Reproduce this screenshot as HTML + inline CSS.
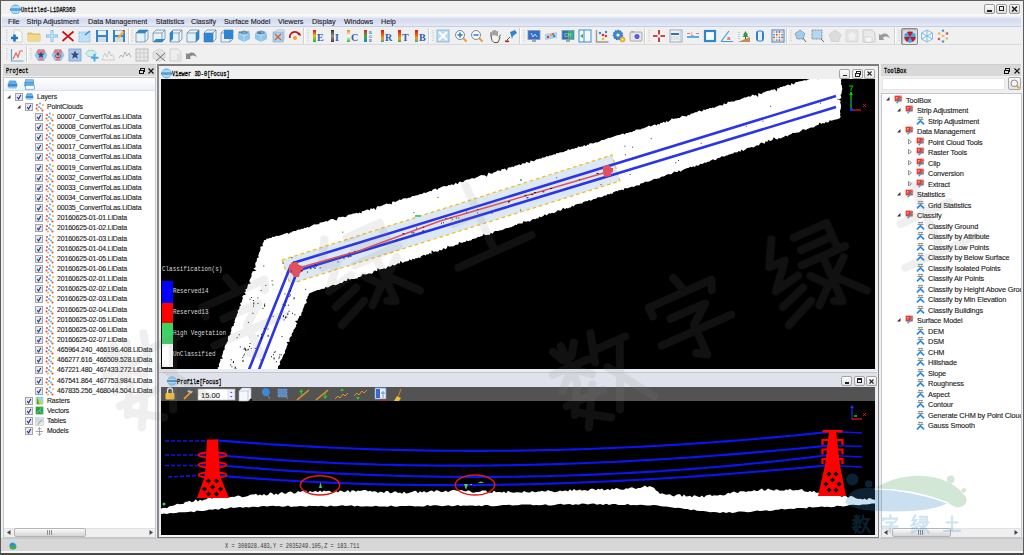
<!DOCTYPE html><html><head><meta charset="utf-8"><style>
html,body{margin:0;padding:0}
body{width:1024px;height:555px;overflow:hidden;background:#f0f0f0;position:relative;font-family:"Liberation Sans",sans-serif}
.a{position:absolute;box-sizing:border-box}
.t{white-space:nowrap;line-height:1;-webkit-text-stroke:0.12px currentColor}
svg{position:absolute;overflow:visible}
</style></head><body>
<div class="a" style="left:0px;top:0px;width:1024px;height:1px;background:#5c5c5c"></div>
<div class="a" style="left:0px;top:0px;width:1px;height:555px;background:#5c5c5c"></div>
<div class="a" style="left:1023px;top:0px;width:1px;height:555px;background:#5c5c5c"></div>
<div class="a" style="left:0px;top:553px;width:1024px;height:2px;background:#4a4a4a"></div>
<svg style="left:10px;top:3.5px" width="11" height="11" viewBox="0 0 22 22"><circle cx="11" cy="11" r="10" fill="#58ace6"/><path d="M5 4.5h12M2.5 7.5h17M2.5 14.5h17M5 17.5h12" stroke="#f0f8fe" stroke-width="1.6"/><rect x="0" y="9.5" width="22" height="3.2" fill="#2a7cc0"/><path d="M2 11.1h18" stroke="#e0f0fb" stroke-width="1" stroke-dasharray="1.6 .8"/></svg>
<div class="a t" style="left:21px;top:6.5px;font-family:'Liberation Mono',monospace;font-size:7.5px;color:#111;letter-spacing:0px;-webkit-text-stroke:0.3px #111;transform:scaleX(0.7111);transform-origin:0 0">Untitled-LiDAR360</div>
<div class="a" style="left:984px;top:4px;width:11px;height:10px;border:1px solid #9a9a9a;border-radius:2px;background:linear-gradient(#fbfbfb,#dcdcdc)"></div>
<div class="a" style="left:996px;top:4px;width:11px;height:10px;border:1px solid #9a9a9a;border-radius:2px;background:linear-gradient(#fbfbfb,#dcdcdc)"></div>
<div class="a" style="left:1009px;top:4px;width:11px;height:10px;border:1px solid #9a9a9a;border-radius:2px;background:linear-gradient(#fbfbfb,#dcdcdc)"></div>
<div class="a" style="left:987px;top:10px;width:5px;height:2px;background:#222"></div>
<div class="a" style="left:999px;top:6px;width:5px;height:5px;border:1.5px solid #222"></div>
<svg style="left:1011px;top:6px" width="7" height="6"><path d="M1 0.5L6 5.5M6 0.5L1 5.5" stroke="#222" stroke-width="1.6"/></svg>
<div class="a" style="left:2px;top:14px;width:1019px;height:13px;background:linear-gradient(#fbfcfe 0%,#f2f4fa 18%,#d5dcef 42%,#d8def0 62%,#e2e8f5 92%);border-bottom:1px solid #c6cee2"></div>
<div class="a t" style="left:8px;top:17.5px;font-family:'Liberation Sans',sans-serif;font-size:7.2px;color:#1a1a2a;letter-spacing:0px;">File</div>
<div class="a t" style="left:26.6px;top:17.5px;font-family:'Liberation Sans',sans-serif;font-size:7.2px;color:#1a1a2a;letter-spacing:0px;">Strip Adjustment</div>
<div class="a t" style="left:88px;top:17.5px;font-family:'Liberation Sans',sans-serif;font-size:7.2px;color:#1a1a2a;letter-spacing:0px;">Data Management</div>
<div class="a t" style="left:155.7px;top:17.5px;font-family:'Liberation Sans',sans-serif;font-size:7.2px;color:#1a1a2a;letter-spacing:0px;">Statistics</div>
<div class="a t" style="left:191px;top:17.5px;font-family:'Liberation Sans',sans-serif;font-size:7.2px;color:#1a1a2a;letter-spacing:0px;">Classify</div>
<div class="a t" style="left:224px;top:17.5px;font-family:'Liberation Sans',sans-serif;font-size:7.2px;color:#1a1a2a;letter-spacing:0px;">Surface Model</div>
<div class="a t" style="left:278px;top:17.5px;font-family:'Liberation Sans',sans-serif;font-size:7.2px;color:#1a1a2a;letter-spacing:0px;">Viewers</div>
<div class="a t" style="left:312px;top:17.5px;font-family:'Liberation Sans',sans-serif;font-size:7.2px;color:#1a1a2a;letter-spacing:0px;">Display</div>
<div class="a t" style="left:344px;top:17.5px;font-family:'Liberation Sans',sans-serif;font-size:7.2px;color:#1a1a2a;letter-spacing:0px;">Windows</div>
<div class="a t" style="left:381px;top:17.5px;font-family:'Liberation Sans',sans-serif;font-size:7.2px;color:#1a1a2a;letter-spacing:0px;">Help</div>
<div class="a" style="left:2px;top:27px;width:1019px;height:18px;background:#f0f0f0;border-bottom:1px solid #dadada"></div>
<div class="a" style="left:2px;top:45px;width:1019px;height:18px;background:#f0f0f0"></div>
<svg style="left:6px;top:29px" width="2" height="14"><path d="M1 1v12" stroke="#b4b4b4" stroke-width=".9" stroke-dasharray=".9 1.6"/></svg>
<svg style="left:131px;top:29px" width="2" height="14"><path d="M1 1v12" stroke="#b4b4b4" stroke-width=".9" stroke-dasharray=".9 1.6"/></svg>
<svg style="left:306.5px;top:29px" width="2" height="14"><path d="M1 1v12" stroke="#b4b4b4" stroke-width=".9" stroke-dasharray=".9 1.6"/></svg>
<svg style="left:431.5px;top:29px" width="2" height="14"><path d="M1 1v12" stroke="#b4b4b4" stroke-width=".9" stroke-dasharray=".9 1.6"/></svg>
<svg style="left:523px;top:29px" width="2" height="14"><path d="M1 1v12" stroke="#b4b4b4" stroke-width=".9" stroke-dasharray=".9 1.6"/></svg>
<svg style="left:648px;top:29px" width="2" height="14"><path d="M1 1v12" stroke="#b4b4b4" stroke-width=".9" stroke-dasharray=".9 1.6"/></svg>
<svg style="left:790px;top:29px" width="2" height="14"><path d="M1 1v12" stroke="#b4b4b4" stroke-width=".9" stroke-dasharray=".9 1.6"/></svg>
<svg style="left:898px;top:29px" width="2" height="14"><path d="M1 1v12" stroke="#b4b4b4" stroke-width=".9" stroke-dasharray=".9 1.6"/></svg>
<div class="a" style="left:127.5px;top:28px;width:1px;height:16px;background:#d0d0d0;border-right:1px solid #fff;width:2px"></div>
<div class="a" style="left:302.5px;top:28px;width:1px;height:16px;background:#d0d0d0;border-right:1px solid #fff;width:2px"></div>
<div class="a" style="left:427.5px;top:28px;width:1px;height:16px;background:#d0d0d0;border-right:1px solid #fff;width:2px"></div>
<div class="a" style="left:518.5px;top:28px;width:1px;height:16px;background:#d0d0d0;border-right:1px solid #fff;width:2px"></div>
<div class="a" style="left:643.5px;top:28px;width:1px;height:16px;background:#d0d0d0;border-right:1px solid #fff;width:2px"></div>
<div class="a" style="left:786px;top:28px;width:1px;height:16px;background:#d0d0d0;border-right:1px solid #fff;width:2px"></div>
<div class="a" style="left:893.5px;top:28px;width:1px;height:16px;background:#d0d0d0;border-right:1px solid #fff;width:2px"></div>
<div class="a" style="left:901px;top:28px;width:17px;height:17px;border:1px solid #8a8a8a;border-radius:2px;background:linear-gradient(#d8d8d8,#e8e8e8);box-shadow:inset 1px 1px 1px #b0b0b0"></div>
<svg style="left:903px;top:30px" width="14" height="14" viewBox="0 0 14 14"><path d="M7 1l5.5 3v6L7 13l-5.5-3V4z" fill="#3aa8e8"/><path d="M7 7L4 1.8h6zM7 7l6 0-3 5.2zM7 7h-6l3 5.2z" fill="#d01020"/></svg>
<svg style="left:10px;top:29px" width="14" height="14" viewBox="0 0 14 14"><path d="M4 1h5l3 3v9H4z" fill="#fafafa" stroke="#c8c8c8" stroke-width=".8"/><path d="M1 9h7M4.5 5.5v7" stroke="#1a7ac4" stroke-width="2.6"/></svg>
<svg style="left:27px;top:29px" width="14" height="14" viewBox="0 0 14 14"><path d="M1 4h4l1 1h7v7H1z" fill="#e8cf74" stroke="#c9ae4e" stroke-width=".7"/><rect x="1" y="6" width="12" height="6" fill="#f0d98a"/></svg>
<svg style="left:45px;top:29px" width="14" height="14" viewBox="0 0 14 14"><path d="M7 1v12M1 7h12" stroke="#7ab8e8" stroke-width="2.8"/><path d="M7 1.8v10.4M1.8 7h10.4" stroke="#dceefb" stroke-width="1.2"/></svg>
<svg style="left:61px;top:29px" width="14" height="14" viewBox="0 0 14 14"><path d="M1.5 2.5L12.5 12M12.5 2.5L1.5 12" stroke="#c8151b" stroke-width="1.7"/></svg>
<svg style="left:78px;top:29px" width="14" height="14" viewBox="0 0 14 14"><rect x="1" y="3" width="11" height="10" fill="#bfe0f7" stroke="#6cb4e6" stroke-width=".8" stroke-dasharray="1 .6"/><path d="M7 6l5-4" stroke="#3b8fd6" stroke-width="1.6"/></svg>
<svg style="left:95px;top:29px" width="14" height="14" viewBox="0 0 14 14"><rect x="1" y="1" width="12" height="12" fill="#2f86d0"/><rect x="3" y="1.5" width="8" height="4.5" fill="#eef2f6"/><rect x="3" y="8" width="8" height="5" fill="#d9dde2"/></svg>
<svg style="left:112px;top:29px" width="14" height="14" viewBox="0 0 14 14"><rect x="1" y="1" width="12" height="12" fill="#2f86d0"/><rect x="3" y="1.5" width="8" height="4.5" fill="#eef2f6"/><rect x="3" y="8" width="8" height="5" fill="#d9dde2"/><path d="M6 9l6-7" stroke="#f2b233" stroke-width="2.2"/><path d="M11.2 2.5l1-1" stroke="#e0453a" stroke-width="2"/></svg>
<svg style="left:135px;top:29px" width="14" height="14" viewBox="0 0 14 14"><path d="M1 4l3-3h9v9l-3 3H1z" fill="#e6f2fb" stroke="#4a6e8c" stroke-width=".6"/><path d="M1 4h9v9M10 4l3-3" fill="none" stroke="#4a6e8c" stroke-width=".6"/><path d="M1 4l3-3h9l-3 3z" fill="#2f86d0"/></svg>
<svg style="left:152px;top:29px" width="14" height="14" viewBox="0 0 14 14"><path d="M1 4l3-3h9v9l-3 3H1z" fill="#e6f2fb" stroke="#4a6e8c" stroke-width=".6"/><path d="M1 4h9v9M10 4l3-3" fill="none" stroke="#4a6e8c" stroke-width=".6"/><path d="M1 13l3-3h9l-3 3z" fill="#2f86d0"/></svg>
<svg style="left:169px;top:29px" width="14" height="14" viewBox="0 0 14 14"><path d="M1 4l3-3h9v9l-3 3H1z" fill="#e6f2fb" stroke="#4a6e8c" stroke-width=".6"/><path d="M1 4h9v9M10 4l3-3" fill="none" stroke="#4a6e8c" stroke-width=".6"/><path d="M1 4l3-3v9l-3 3z" fill="#2f86d0"/></svg>
<svg style="left:186px;top:29px" width="14" height="14" viewBox="0 0 14 14"><path d="M1 4l3-3h9v9l-3 3H1z" fill="#e6f2fb" stroke="#4a6e8c" stroke-width=".6"/><path d="M1 4h9v9M10 4l3-3" fill="none" stroke="#4a6e8c" stroke-width=".6"/><path d="M10 4l3-3v9l-3 3z" fill="#2f86d0"/></svg>
<svg style="left:203px;top:29px" width="14" height="14" viewBox="0 0 14 14"><path d="M1 4l3-3h9v9l-3 3H1z" fill="#e6f2fb" stroke="#4a6e8c" stroke-width=".6"/><path d="M1 4h9v9M10 4l3-3" fill="none" stroke="#4a6e8c" stroke-width=".6"/><rect x="1" y="4" width="9" height="9" fill="#2f86d0"/></svg>
<svg style="left:220px;top:29px" width="14" height="14" viewBox="0 0 14 14"><path d="M1 4l3-3h9v9l-3 3H1z" fill="#e6f2fb" stroke="#4a6e8c" stroke-width=".6"/><path d="M1 4h9v9M10 4l3-3" fill="none" stroke="#4a6e8c" stroke-width=".6"/><rect x="4" y="1" width="9" height="9" fill="#2f86d0"/></svg>
<svg style="left:237px;top:29px" width="14" height="14" viewBox="0 0 14 14"><path d="M1 4l6-3 6 3v6l-6 3-6-3z" fill="#8cc6ef"/><path d="M1 4l6 3 6-3M7 7v6" stroke="#c9e6fa" stroke-width=".7" fill="none"/><text x="7" y="4.5" font-size="3" text-anchor="middle" fill="#333" font-family="Liberation Sans">FRONT</text></svg>
<svg style="left:254px;top:29px" width="14" height="14" viewBox="0 0 14 14"><path d="M1 4l6-3 6 3v6l-6 3-6-3z" fill="#8cc6ef"/><path d="M1 4l6 3 6-3M7 7v6" stroke="#c9e6fa" stroke-width=".7" fill="none"/><text x="7" y="4.5" font-size="3" text-anchor="middle" fill="#333" font-family="Liberation Sans">BACK</text></svg>
<svg style="left:271px;top:29px" width="14" height="14" viewBox="0 0 14 14"><rect x="2" y="3" width="10" height="10" fill="#a9d3f2" stroke="#7aa6c8" stroke-width=".6"/><path d="M4 5l6 6M10 5l-6 6" stroke="#e05a2a" stroke-width="1.2"/><path d="M4 3l2-2h7v9l-1 2" fill="none" stroke="#7aa6c8" stroke-width=".6"/></svg>
<svg style="left:288px;top:29px" width="14" height="14" viewBox="0 0 14 14"><path d="M2 9A5 5 0 0 1 11.5 6" stroke="#b9161a" stroke-width="1.8" fill="none"/><path d="M9.5 5.5l3.5 1.5-1 -3.5z" fill="#b9161a"/><circle cx="7" cy="9" r="2" fill="#f0a020"/></svg>
<svg style="left:312px;top:29px" width="14" height="14" viewBox="0 0 14 14"><defs><linearGradient id="gE" x1="0" y1="0" x2="0" y2="1"><stop offset="0" stop-color="#e01010"/><stop offset=".5" stop-color="#e8c020"/><stop offset="1" stop-color="#20b040"/></linearGradient></defs><rect x="1" y="1" width="3" height="12" fill="url(#gE)"/><text x="5" y="11.5" font-family="Liberation Serif" font-weight="bold" font-size="10" fill="#2a5fb8">E</text></svg>
<svg style="left:330px;top:29px" width="14" height="14" viewBox="0 0 14 14"><defs><linearGradient id="gI" x1="0" y1="0" x2="0" y2="1"><stop offset="0" stop-color="#303030"/><stop offset=".5" stop-color="#909090"/><stop offset="1" stop-color="#404040"/></linearGradient></defs><rect x="1" y="1" width="3" height="12" fill="url(#gI)"/><text x="5" y="11.5" font-family="Liberation Serif" font-weight="bold" font-size="10" fill="#2a5fb8">I</text></svg>
<svg style="left:346px;top:29px" width="14" height="14" viewBox="0 0 14 14"><defs><linearGradient id="gC" x1="0" y1="0" x2="0" y2="1"><stop offset="0" stop-color="#f08020"/><stop offset=".5" stop-color="#ffffff"/><stop offset="1" stop-color="#40b040"/></linearGradient></defs><rect x="1" y="1" width="3" height="12" fill="url(#gC)"/><text x="5" y="11.5" font-family="Liberation Serif" font-weight="bold" font-size="10" fill="#2a5fb8">C</text></svg>
<svg style="left:363px;top:29px" width="14" height="14" viewBox="0 0 14 14"><defs><linearGradient id="gRGB" x1="0" y1="0" x2="0" y2="1"><stop offset="0" stop-color="#e02020"/><stop offset=".5" stop-color="#40b040"/><stop offset="1" stop-color="#2080e0"/></linearGradient></defs><rect x="1" y="1" width="3" height="12" fill="url(#gRGB)"/><text x="6" y="5" font-family="Liberation Serif" font-size="4" font-weight="bold" fill="#2a5fb8">R</text><text x="6" y="9" font-family="Liberation Serif" font-size="4" font-weight="bold" fill="#2a5fb8">G</text><text x="6" y="13" font-family="Liberation Serif" font-size="4" font-weight="bold" fill="#2a5fb8">B</text></svg>
<svg style="left:380px;top:29px" width="14" height="14" viewBox="0 0 14 14"><defs><linearGradient id="gR" x1="0" y1="0" x2="0" y2="1"><stop offset="0" stop-color="#e01010"/><stop offset=".7" stop-color="#e8a020"/><stop offset="1" stop-color="#20b0a0"/></linearGradient></defs><rect x="1" y="1" width="3" height="12" fill="url(#gR)"/><text x="5" y="11.5" font-family="Liberation Serif" font-weight="bold" font-size="10" fill="#2a5fb8">R</text></svg>
<svg style="left:397px;top:29px" width="14" height="14" viewBox="0 0 14 14"><defs><linearGradient id="gT" x1="0" y1="0" x2="0" y2="1"><stop offset="0" stop-color="#e01010"/><stop offset=".7" stop-color="#e8a020"/><stop offset="1" stop-color="#20b060"/></linearGradient></defs><rect x="1" y="1" width="3" height="12" fill="url(#gT)"/><text x="5" y="11.5" font-family="Liberation Serif" font-weight="bold" font-size="10" fill="#2a5fb8">T</text></svg>
<svg style="left:414px;top:29px" width="14" height="14" viewBox="0 0 14 14"><defs><linearGradient id="gB" x1="0" y1="0" x2="0" y2="1"><stop offset="0" stop-color="#e01010"/><stop offset=".7" stop-color="#e8a020"/><stop offset="1" stop-color="#20b0c0"/></linearGradient></defs><rect x="1" y="1" width="3" height="12" fill="url(#gB)"/><text x="5" y="11.5" font-family="Liberation Serif" font-weight="bold" font-size="10" fill="#2a5fb8">B</text></svg>
<svg style="left:436px;top:29px" width="14" height="14" viewBox="0 0 14 14"><rect x="1" y="1" width="12" height="12" fill="#bcdcf4" stroke="#7cb2dc" stroke-width=".8"/><path d="M3 3l3 3M11 3l-3 3M3 11l3-3M11 11l-3-3" stroke="#fff" stroke-width="1.8"/><circle cx="7" cy="7" r="2" fill="#fff"/></svg>
<svg style="left:454px;top:29px" width="14" height="14" viewBox="0 0 14 14"><circle cx="6" cy="6" r="4.5" fill="#f4f8fb" stroke="#7a8a98" stroke-width="1"/><path d="M3.5 6h5M6 3.5v5" stroke="#2f7ed0" stroke-width="1.5"/><path d="M9 9l3.5 3.5" stroke="#e8a040" stroke-width="2.2"/></svg>
<svg style="left:470px;top:29px" width="14" height="14" viewBox="0 0 14 14"><circle cx="6" cy="6" r="4.5" fill="#f4f8fb" stroke="#7a8a98" stroke-width="1"/><path d="M3.5 6h5" stroke="#2f7ed0" stroke-width="1.5"/><path d="M9 9l3.5 3.5" stroke="#e8a040" stroke-width="2.2"/></svg>
<svg style="left:488px;top:29px" width="14" height="14" viewBox="0 0 14 14"><path d="M3 7V3.5M5 6V2M7 6V1.5M9 6.5V2.5M11 8l1.5-2M3 7l1 4.5 2 2h4l2-5" stroke="#555" stroke-width="1" fill="#f4f4ea" stroke-linecap="round"/></svg>
<svg style="left:504px;top:29px" width="14" height="14" viewBox="0 0 14 14"><path d="M6 3l5-2 2 3-4 3-1 3z" fill="#2f86d0"/><path d="M6 8L3 11" stroke="#555" stroke-width="1"/><ellipse cx="3" cy="12.3" rx="2.2" ry="1" fill="#c81a1a"/></svg>
<svg style="left:527px;top:29px" width="14" height="14" viewBox="0 0 14 14"><rect x="1" y="1.5" width="12" height="9" fill="#2f6fcc" stroke="#8a9aaa" stroke-width=".8"/><path d="M4 4l2 4 2-3 2 3" stroke="#fff" stroke-width=".7" fill="none"/><rect x="5" y="11" width="4" height="2" fill="#9aa8b4"/></svg>
<svg style="left:544px;top:29px" width="14" height="14" viewBox="0 0 14 14"><path d="M1 5l12-2v6L1 11z" fill="#a8d4f0"/><circle cx="4" cy="8" r="1.2" fill="#e04040"/><circle cx="7" cy="6" r="1.2" fill="#f0b020"/><circle cx="10" cy="7" r="1.2" fill="#2f86d0"/><circle cx="9" cy="5" r="1" fill="#e04040"/></svg>
<svg style="left:561px;top:29px" width="14" height="14" viewBox="0 0 14 14"><rect x="1" y="1.5" width="12" height="9" fill="#2f6fcc" stroke="#8a9aaa" stroke-width=".8"/><rect x="7" y="2" width="5.5" height="8" fill="#2ab08a"/><text x="3" y="8" font-size="5" fill="#e0e040" font-family="Liberation Sans">CH</text><rect x="5" y="11" width="4" height="2" fill="#9aa8b4"/></svg>
<svg style="left:578px;top:29px" width="14" height="14" viewBox="0 0 14 14"><rect x="1" y="1" width="12" height="12" fill="#f4f6f8" stroke="#3b8fd6" stroke-width="1"/><path d="M6 1v12" stroke="#3b8fd6" stroke-width="1"/><path d="M5 5l-3 2 3 2z" fill="#40b040"/></svg>
<svg style="left:595px;top:29px" width="14" height="14" viewBox="0 0 14 14"><path d="M1.5 1v12h12" stroke="#999" stroke-width="1.4" fill="none"/><circle cx="5" cy="4" r="1.2" fill="#2f86d0"/><circle cx="8" cy="6" r="1.3" fill="#e03030"/><circle cx="11" cy="3" r="1.2" fill="#2f86d0"/><circle cx="8" cy="10" r="1.3" fill="#f0c020"/><circle cx="11" cy="7" r="1.2" fill="#e03030"/></svg>
<svg style="left:612px;top:29px" width="14" height="14" viewBox="0 0 14 14"><circle cx="6" cy="6" r="4.5" fill="#3d8ad4" stroke="#2f70b8" stroke-width="1.5" stroke-dasharray="1.5 1"/><circle cx="6" cy="6" r="1.6" fill="#fff"/><circle cx="10.5" cy="10.5" r="2.8" fill="#f0a818"/><circle cx="10.5" cy="10.5" r="1" fill="#fff"/></svg>
<svg style="left:629px;top:29px" width="14" height="14" viewBox="0 0 14 14"><rect x="1" y="3" width="12" height="9" rx="1" fill="#e6e6e6" stroke="#999" stroke-width=".8"/><circle cx="8" cy="7.5" r="2.5" fill="#5a5ae0"/><rect x="2" y="2" width="3" height="1.5" fill="#aaa"/></svg>
<svg style="left:652px;top:29px" width="14" height="14" viewBox="0 0 14 14"><path d="M7 1v4.5M7 8.5V13M1 7h4.5M8.5 7H13" stroke="#b01818" stroke-width="1.6"/></svg>
<svg style="left:669px;top:29px" width="14" height="14" viewBox="0 0 14 14"><rect x="1" y="1" width="12" height="12" fill="#f0f2f4" stroke="#8a9aaa" stroke-width=".8"/><rect x="2" y="4" width="8" height="2" fill="#3a6fb0"/><path d="M2 8h8M2 10h8" stroke="#9aa" stroke-width=".6" stroke-dasharray="1 .6"/><rect x="10.5" y="2" width="2" height="10" fill="#c8d8e8"/></svg>
<svg style="left:686px;top:29px" width="14" height="14" viewBox="0 0 14 14"><rect x="1" y="7" width="12" height="2" fill="#5aaae8"/><path d="M1 4.5h3M10 4.5h3" stroke="#e05050" stroke-width=".8"/><text x="5" y="6.5" font-size="5" fill="#e05050" font-family="Liberation Sans">L</text></svg>
<svg style="left:703px;top:29px" width="14" height="14" viewBox="0 0 14 14"><rect x="2" y="2" width="10" height="10" fill="#fff" stroke="#2f86d0" stroke-width="2.2"/></svg>
<svg style="left:720px;top:29px" width="14" height="14" viewBox="0 0 14 14"><path d="M1 12.5h12M1 12.5L9 2" stroke="#3b9be0" stroke-width="1.2" fill="none"/><text x="7" y="11" font-size="6" fill="#e02020" font-family="Liberation Sans">a</text></svg>
<svg style="left:737px;top:29px" width="14" height="14" viewBox="0 0 14 14"><path d="M1 13l12-5v5z" fill="#c98a5a"/><path d="M8.5 2l-2.5 4h5z M8.5 4l-3 4h6z" fill="#2a9a4a"/><rect x="8" y="8" width="1" height="2" fill="#6a4a2a"/><path d="M2 3v8" stroke="#9ab" stroke-width="1" stroke-dasharray="1 1"/></svg>
<svg style="left:753px;top:29px" width="14" height="14" viewBox="0 0 14 14"><rect x="3" y="1.5" width="8" height="11" rx="3" fill="#2f7ed0"/><rect x="5" y="2.5" width="4" height="9" fill="#e6f0fa"/></svg>
<svg style="left:771px;top:29px" width="14" height="14" viewBox="0 0 14 14"><rect x="1" y="1" width="12" height="12" fill="#eef4fb" stroke="#3b7fd0" stroke-width="1"/><circle cx="3.0" cy="3.0" r=".9" fill="#f0c020"/><circle cx="3.0" cy="5.7" r=".9" fill="#3a9ae0"/><circle cx="3.0" cy="8.4" r=".9" fill="#e03030"/><circle cx="3.0" cy="11.100000000000001" r=".9" fill="#f0c020"/><circle cx="5.7" cy="3.0" r=".9" fill="#3a9ae0"/><circle cx="5.7" cy="5.7" r=".9" fill="#e03030"/><circle cx="5.7" cy="8.4" r=".9" fill="#f0c020"/><circle cx="5.7" cy="11.100000000000001" r=".9" fill="#3a9ae0"/><circle cx="8.4" cy="3.0" r=".9" fill="#e03030"/><circle cx="8.4" cy="5.7" r=".9" fill="#f0c020"/><circle cx="8.4" cy="8.4" r=".9" fill="#3a9ae0"/><circle cx="8.4" cy="11.100000000000001" r=".9" fill="#e03030"/><circle cx="11.100000000000001" cy="3.0" r=".9" fill="#f0c020"/><circle cx="11.100000000000001" cy="5.7" r=".9" fill="#3a9ae0"/><circle cx="11.100000000000001" cy="8.4" r=".9" fill="#e03030"/><circle cx="11.100000000000001" cy="11.100000000000001" r=".9" fill="#f0c020"/></svg>
<svg style="left:794px;top:29px" width="14" height="14" viewBox="0 0 14 14"><path d="M6 1l5 3.5-2 5.5H3L1 4.5z" fill="#9ccef0" stroke="#555" stroke-width=".6" stroke-dasharray="1 .5"/><path d="M9 9l3 4" stroke="#666" stroke-width="1"/></svg>
<svg style="left:811px;top:29px" width="14" height="14" viewBox="0 0 14 14"><rect x="1" y="1" width="10" height="9" fill="#b4d8f4" stroke="#555" stroke-width=".6" stroke-dasharray="1 .5"/><path d="M10 10l3 3" stroke="#666" stroke-width="1"/></svg>
<svg style="left:828px;top:29px" width="14" height="14" viewBox="0 0 14 14"><path d="M7 1l6 4.5-2.3 7H3.3L1 5.5z" fill="#dcdcdc" stroke="#c8c8c8" stroke-width=".6"/></svg>
<svg style="left:845px;top:29px" width="14" height="14" viewBox="0 0 14 14"><rect x="1" y="1" width="12" height="12" fill="#e4e4e4" stroke="#d0d0d0" stroke-width=".6"/><path d="M7 3l4 3-1.5 5h-5L3 6z" fill="#f0f0f0"/></svg>
<svg style="left:862px;top:29px" width="14" height="14" viewBox="0 0 14 14"><path d="M1 1h9l3 3v9H1z" fill="#eaeaea" stroke="#c0c0c0" stroke-width=".8"/><rect x="3" y="8" width="7" height="5" fill="#f6f6f6" stroke="#c0c0c0" stroke-width=".5"/></svg>
<svg style="left:878px;top:29px" width="14" height="14" viewBox="0 0 14 14"><path d="M3 6c4-3 8-1 9 4-2-3-5-3-7-1l1 2H1V5z" fill="#9a9a9a"/></svg>
<svg style="left:920px;top:29px" width="14" height="14" viewBox="0 0 14 14"><path d="M7 1l5.5 3v6L7 13l-5.5-3V4z M7 1v12M1.5 4l11 6M12.5 4l-11 6" fill="none" stroke="#6ab4e6" stroke-width=".8"/></svg>
<svg style="left:936px;top:29px" width="14" height="14" viewBox="0 0 14 14"><circle cx="7" cy="1.8" r="1.2" fill="#3a8ad0"/><circle cx="3" cy="4.5" r="1.2" fill="#f0c020"/><circle cx="11" cy="4.5" r="1.2" fill="#e03030"/><circle cx="7" cy="7" r="1.3" fill="#f0c020"/><circle cx="3" cy="10" r="1.2" fill="#e03030"/><circle cx="11" cy="9.5" r="1.2" fill="#f0c020"/><circle cx="7" cy="12.5" r="1.2" fill="#3a8ad0"/><path d="M7 2L3 4.5 7 7 11 4.5z M7 7L3 10 7 12.5 11 9.5z" fill="none" stroke="#b8d0e8" stroke-width=".4"/></svg>
<svg style="left:6px;top:47px" width="2" height="14"><path d="M1 1v12" stroke="#b4b4b4" stroke-width=".9" stroke-dasharray=".9 1.6"/></svg>
<svg style="left:29.5px;top:47px" width="2" height="14"><path d="M1 1v12" stroke="#b4b4b4" stroke-width=".9" stroke-dasharray=".9 1.6"/></svg>
<div class="a" style="left:25.5px;top:46px;width:1px;height:16px;background:#d0d0d0;border-right:1px solid #fff;width:2px"></div>
<svg style="left:10px;top:48px" width="14" height="14" viewBox="0 0 14 14"><path d="M1.5 1v12h12" stroke="#5aa6e0" stroke-width="1.2" fill="none"/><path d="M3 11l3-6 2 4 2-6h3" stroke="#e86050" stroke-width="1.2" fill="none"/></svg>
<svg style="left:34px;top:48px" width="14" height="14" viewBox="0 0 14 14"><path d="M1 7l3-5.5h6L13 7l-3 5.5H4z" fill="#8ccdf2" stroke="#6ab0e0" stroke-width=".5"/><path d="M7 7L2.5 4.5 4 1.5h2.5zM7 7l4.5-2.5L10 1.5H7.5zM7 7l-2.5 5.5h5z" fill="#f07878"/><path d="M7 3.2l1 2.6h2.6l-2.1 1.6.9 2.7L7 8.5 4.6 10.1l.9-2.7L3.4 5.8H6z" fill="#2a4a80"/></svg>
<svg style="left:51px;top:48px" width="14" height="14" viewBox="0 0 14 14"><path d="M1 7l3-5.5h6L13 7l-3 5.5H4z" fill="#8ccdf2" stroke="#6ab0e0" stroke-width=".5"/><path d="M7 7L2.5 4.5 4 1.5h2.5zM7 7l4.5-2.5L10 1.5H7.5zM7 7l-2.5 5.5h5z" fill="#f07878"/><ellipse cx="7" cy="8" rx="3" ry="1.6" fill="none" stroke="#c02020" stroke-width=".8"/><rect x="6" y="4.5" width="2" height="3" fill="#2a5a9a"/></svg>
<svg style="left:68px;top:48px" width="14" height="14" viewBox="0 0 14 14"><rect x="1" y="1" width="12" height="12" fill="#a8c8ee" stroke="#7a9ec8" stroke-width=".8"/><path d="M7 2.5l1.3 3h3l-2.4 2 1 3.2L7 8.9 4.1 10.7l1-3.2-2.4-2h3z" fill="#3a4a80"/></svg>
<svg style="left:85px;top:48px" width="14" height="14" viewBox="0 0 14 14"><ellipse cx="6" cy="5.5" rx="5" ry="3.2" fill="#d4ecf4" stroke="#7ad0a8" stroke-width=".8"/><path d="M9.5 6v7.5M6 9.8h7.5" stroke="#4aaae8" stroke-width="2"/></svg>
<svg style="left:101px;top:48px" width="14" height="14" viewBox="0 0 14 14"><path d="M1 12l3-7 2 4 2-6 2 5 1.5-2 2 6z" fill="none" stroke="#b0b0b0" stroke-width=".8" stroke-dasharray="1 .5"/></svg>
<svg style="left:118px;top:48px" width="14" height="14" viewBox="0 0 14 14"><path d="M1 10l2-3 2 2 2-5 2 4 2-3 2 4" fill="none" stroke="#a0a0a0" stroke-width=".8"/></svg>
<svg style="left:135px;top:48px" width="14" height="14" viewBox="0 0 14 14"><rect x="1" y="1" width="12" height="12" fill="#e8e8e8" stroke="#b0b0b0" stroke-width=".8"/><path d="M1 5h12M1 9h12M5 1v12M9 1v12" stroke="#c0c0c0" stroke-width=".6"/></svg>
<svg style="left:152px;top:48px" width="14" height="14" viewBox="0 0 14 14"><path d="M7 .8l6 3.2v6L7 13.2 1 10V4z" fill="#e2e2e2" stroke="#c8c8c8" stroke-width=".6"/><path d="M4 5l9 8M13 5l-9 8" stroke="#707070" stroke-width="1"/></svg>
<svg style="left:169px;top:48px" width="14" height="14" viewBox="0 0 14 14"><path d="M1 1h8l3 3v9H1z" fill="#ededed" stroke="#c8c8c8" stroke-width=".8"/><path d="M8 5l5 3v5l-5 1z" fill="#dedede"/></svg>
<svg style="left:185px;top:48px" width="14" height="14" viewBox="0 0 14 14"><path d="M3 6c4-3 8-1 9 4-2-3-5-3-7-1l1 2H1V5z" fill="#8a8a8a"/></svg>
<div class="a" style="left:3px;top:64px;width:153px;height:12px;background:#d8d8d8;border-top:1px solid #cfcfcf"></div>
<div class="a t" style="left:6px;top:68px;font-family:'Liberation Mono',monospace;font-size:7.5px;color:#000;letter-spacing:0px;-webkit-text-stroke:0.3px #000;transform:scaleX(0.7111);transform-origin:0 0">Project</div>
<svg style="left:139px;top:68px" width="6" height="6"><rect x="1.5" y=".5" width="4" height="3" fill="none" stroke="#111" stroke-width="1"/><rect x=".5" y="2.5" width="4" height="3" fill="#d8d8d8" stroke="#111" stroke-width="1"/></svg>
<svg style="left:148px;top:68px" width="6" height="6"><path d="M.5 .5l5 5M5.5 .5l-5 5" stroke="#111" stroke-width="1.2"/></svg>
<div class="a" style="left:3px;top:77px;width:153px;height:461px;background:#fff;border:1px solid #c2c8d2"></div>
<div class="a" style="left:4px;top:78px;width:151px;height:13px;background:linear-gradient(#ffffff,#eef1f6);border-bottom:1px solid #dde2ea"></div>
<svg style="left:7px;top:79px" width="11" height="11" viewBox="0 0 14 14"><path d="M3 2h8l2 4H1z" fill="#5aaae8"/><rect x="1" y="6" width="12" height="4" fill="#3d8ad4"/><path d="M1 10h12l-1.5 2h-9z" fill="#8cc6ef"/></svg>
<svg style="left:24px;top:79px" width="11" height="11" viewBox="0 0 14 14"><rect x="2" y="1" width="10" height="5" fill="#8cc6ef" stroke="#3d8ad4" stroke-width=".8"/><rect x="1" y="4" width="11" height="5" fill="#5aaae8" stroke="#3d8ad4" stroke-width=".8"/><rect x="2" y="8" width="11" height="5" fill="#fff" stroke="#3d8ad4" stroke-width=".8"/></svg>
<svg style="left:7px;top:94.6px" width="4" height="4"><path d="M3.5 0V3.5H0z" fill="#333"/></svg>
<svg style="left:15px;top:93px" width="8" height="8"><rect x=".5" y=".5" width="7" height="7" fill="#e6e8ee" stroke="#a4a4a4" stroke-width="1"/><path d="M2.2 4.2l1.4 1.8L5.8 2" stroke="#2a3a8a" stroke-width="1.2" fill="none"/></svg>
<svg style="left:25px;top:92.1px" width="9" height="9" viewBox="0 0 14 14"><path d="M3 2h8l2 4H1z" fill="#5aaae8"/><rect x="1" y="6" width="12" height="4" fill="#3d8ad4"/><path d="M1 10h12l-1.5 2h-9z" fill="#8cc6ef"/></svg>
<div class="a t" style="left:37px;top:93.6px;font-family:'Liberation Sans',sans-serif;font-size:6.9px;color:#1a1a1a;letter-spacing:-0.12px;">Layers</div>
<svg style="left:17px;top:104.74px" width="4" height="4"><path d="M3.5 0V3.5H0z" fill="#333"/></svg>
<svg style="left:25px;top:103px" width="8" height="8"><rect x=".5" y=".5" width="7" height="7" fill="#e6e8ee" stroke="#a4a4a4" stroke-width="1"/><path d="M2.2 4.2l1.4 1.8L5.8 2" stroke="#2a3a8a" stroke-width="1.2" fill="none"/></svg>
<svg style="left:35px;top:101.74px" width="10" height="10"><circle cx="2" cy="3" r="1" fill="#e84040"/><circle cx="5" cy="1.5" r="1" fill="#5aaae8"/><circle cx="8" cy="3" r="1" fill="#f0b030"/><circle cx="4" cy="5" r="1" fill="#5aaae8"/><circle cx="1.5" cy="6.5" r="1" fill="#e84040"/><circle cx="6" cy="6.5" r="1" fill="#5aaae8"/><circle cx="3" cy="8.5" r="1" fill="#f0b030"/><circle cx="7.5" cy="8.5" r="1" fill="#e84040"/></svg>
<div class="a t" style="left:47px;top:103.74px;font-family:'Liberation Sans',sans-serif;font-size:6.9px;color:#1a1a1a;letter-spacing:-0.12px;">PointClouds</div>
<svg style="left:35px;top:113px" width="8" height="8"><rect x=".5" y=".5" width="7" height="7" fill="#e6e8ee" stroke="#a4a4a4" stroke-width="1"/><path d="M2.2 4.2l1.4 1.8L5.8 2" stroke="#2a3a8a" stroke-width="1.2" fill="none"/></svg>
<svg style="left:45px;top:111.88px" width="10" height="10"><circle cx="2" cy="3" r="1" fill="#e84040"/><circle cx="5" cy="1.5" r="1" fill="#5aaae8"/><circle cx="8" cy="3" r="1" fill="#f0b030"/><circle cx="4" cy="5" r="1" fill="#5aaae8"/><circle cx="1.5" cy="6.5" r="1" fill="#e84040"/><circle cx="6" cy="6.5" r="1" fill="#5aaae8"/><circle cx="3" cy="8.5" r="1" fill="#f0b030"/><circle cx="7.5" cy="8.5" r="1" fill="#e84040"/></svg>
<div class="a t" style="left:57px;top:113.88px;font-family:'Liberation Sans',sans-serif;font-size:6.9px;color:#1a1a1a;letter-spacing:-0.12px;">00007_ConvertToLas.LiData</div>
<svg style="left:35px;top:123px" width="8" height="8"><rect x=".5" y=".5" width="7" height="7" fill="#e6e8ee" stroke="#a4a4a4" stroke-width="1"/><path d="M2.2 4.2l1.4 1.8L5.8 2" stroke="#2a3a8a" stroke-width="1.2" fill="none"/></svg>
<svg style="left:45px;top:122.02px" width="10" height="10"><circle cx="2" cy="3" r="1" fill="#e84040"/><circle cx="5" cy="1.5" r="1" fill="#5aaae8"/><circle cx="8" cy="3" r="1" fill="#f0b030"/><circle cx="4" cy="5" r="1" fill="#5aaae8"/><circle cx="1.5" cy="6.5" r="1" fill="#e84040"/><circle cx="6" cy="6.5" r="1" fill="#5aaae8"/><circle cx="3" cy="8.5" r="1" fill="#f0b030"/><circle cx="7.5" cy="8.5" r="1" fill="#e84040"/></svg>
<div class="a t" style="left:57px;top:124.02px;font-family:'Liberation Sans',sans-serif;font-size:6.9px;color:#1a1a1a;letter-spacing:-0.12px;">00008_ConvertToLas.LiData</div>
<svg style="left:35px;top:133px" width="8" height="8"><rect x=".5" y=".5" width="7" height="7" fill="#e6e8ee" stroke="#a4a4a4" stroke-width="1"/><path d="M2.2 4.2l1.4 1.8L5.8 2" stroke="#2a3a8a" stroke-width="1.2" fill="none"/></svg>
<svg style="left:45px;top:132.16px" width="10" height="10"><circle cx="2" cy="3" r="1" fill="#e84040"/><circle cx="5" cy="1.5" r="1" fill="#5aaae8"/><circle cx="8" cy="3" r="1" fill="#f0b030"/><circle cx="4" cy="5" r="1" fill="#5aaae8"/><circle cx="1.5" cy="6.5" r="1" fill="#e84040"/><circle cx="6" cy="6.5" r="1" fill="#5aaae8"/><circle cx="3" cy="8.5" r="1" fill="#f0b030"/><circle cx="7.5" cy="8.5" r="1" fill="#e84040"/></svg>
<div class="a t" style="left:57px;top:134.16px;font-family:'Liberation Sans',sans-serif;font-size:6.9px;color:#1a1a1a;letter-spacing:-0.12px;">00009_ConvertToLas.LiData</div>
<svg style="left:35px;top:143px" width="8" height="8"><rect x=".5" y=".5" width="7" height="7" fill="#e6e8ee" stroke="#a4a4a4" stroke-width="1"/><path d="M2.2 4.2l1.4 1.8L5.8 2" stroke="#2a3a8a" stroke-width="1.2" fill="none"/></svg>
<svg style="left:45px;top:142.3px" width="10" height="10"><circle cx="2" cy="3" r="1" fill="#e84040"/><circle cx="5" cy="1.5" r="1" fill="#5aaae8"/><circle cx="8" cy="3" r="1" fill="#f0b030"/><circle cx="4" cy="5" r="1" fill="#5aaae8"/><circle cx="1.5" cy="6.5" r="1" fill="#e84040"/><circle cx="6" cy="6.5" r="1" fill="#5aaae8"/><circle cx="3" cy="8.5" r="1" fill="#f0b030"/><circle cx="7.5" cy="8.5" r="1" fill="#e84040"/></svg>
<div class="a t" style="left:57px;top:144.3px;font-family:'Liberation Sans',sans-serif;font-size:6.9px;color:#1a1a1a;letter-spacing:-0.12px;">00017_ConvertToLas.LiData</div>
<svg style="left:35px;top:153px" width="8" height="8"><rect x=".5" y=".5" width="7" height="7" fill="#e6e8ee" stroke="#a4a4a4" stroke-width="1"/><path d="M2.2 4.2l1.4 1.8L5.8 2" stroke="#2a3a8a" stroke-width="1.2" fill="none"/></svg>
<svg style="left:45px;top:152.44px" width="10" height="10"><circle cx="2" cy="3" r="1" fill="#e84040"/><circle cx="5" cy="1.5" r="1" fill="#5aaae8"/><circle cx="8" cy="3" r="1" fill="#f0b030"/><circle cx="4" cy="5" r="1" fill="#5aaae8"/><circle cx="1.5" cy="6.5" r="1" fill="#e84040"/><circle cx="6" cy="6.5" r="1" fill="#5aaae8"/><circle cx="3" cy="8.5" r="1" fill="#f0b030"/><circle cx="7.5" cy="8.5" r="1" fill="#e84040"/></svg>
<div class="a t" style="left:57px;top:154.44px;font-family:'Liberation Sans',sans-serif;font-size:6.9px;color:#1a1a1a;letter-spacing:-0.12px;">00018_ConvertToLas.LiData</div>
<svg style="left:35px;top:164px" width="8" height="8"><rect x=".5" y=".5" width="7" height="7" fill="#e6e8ee" stroke="#a4a4a4" stroke-width="1"/><path d="M2.2 4.2l1.4 1.8L5.8 2" stroke="#2a3a8a" stroke-width="1.2" fill="none"/></svg>
<svg style="left:45px;top:162.57999999999998px" width="10" height="10"><circle cx="2" cy="3" r="1" fill="#e84040"/><circle cx="5" cy="1.5" r="1" fill="#5aaae8"/><circle cx="8" cy="3" r="1" fill="#f0b030"/><circle cx="4" cy="5" r="1" fill="#5aaae8"/><circle cx="1.5" cy="6.5" r="1" fill="#e84040"/><circle cx="6" cy="6.5" r="1" fill="#5aaae8"/><circle cx="3" cy="8.5" r="1" fill="#f0b030"/><circle cx="7.5" cy="8.5" r="1" fill="#e84040"/></svg>
<div class="a t" style="left:57px;top:164.57999999999998px;font-family:'Liberation Sans',sans-serif;font-size:6.9px;color:#1a1a1a;letter-spacing:-0.12px;">00019_ConvertToLas.LiData</div>
<svg style="left:35px;top:174px" width="8" height="8"><rect x=".5" y=".5" width="7" height="7" fill="#e6e8ee" stroke="#a4a4a4" stroke-width="1"/><path d="M2.2 4.2l1.4 1.8L5.8 2" stroke="#2a3a8a" stroke-width="1.2" fill="none"/></svg>
<svg style="left:45px;top:172.72px" width="10" height="10"><circle cx="2" cy="3" r="1" fill="#e84040"/><circle cx="5" cy="1.5" r="1" fill="#5aaae8"/><circle cx="8" cy="3" r="1" fill="#f0b030"/><circle cx="4" cy="5" r="1" fill="#5aaae8"/><circle cx="1.5" cy="6.5" r="1" fill="#e84040"/><circle cx="6" cy="6.5" r="1" fill="#5aaae8"/><circle cx="3" cy="8.5" r="1" fill="#f0b030"/><circle cx="7.5" cy="8.5" r="1" fill="#e84040"/></svg>
<div class="a t" style="left:57px;top:174.72px;font-family:'Liberation Sans',sans-serif;font-size:6.9px;color:#1a1a1a;letter-spacing:-0.12px;">00032_ConvertToLas.LiData</div>
<svg style="left:35px;top:184px" width="8" height="8"><rect x=".5" y=".5" width="7" height="7" fill="#e6e8ee" stroke="#a4a4a4" stroke-width="1"/><path d="M2.2 4.2l1.4 1.8L5.8 2" stroke="#2a3a8a" stroke-width="1.2" fill="none"/></svg>
<svg style="left:45px;top:182.86px" width="10" height="10"><circle cx="2" cy="3" r="1" fill="#e84040"/><circle cx="5" cy="1.5" r="1" fill="#5aaae8"/><circle cx="8" cy="3" r="1" fill="#f0b030"/><circle cx="4" cy="5" r="1" fill="#5aaae8"/><circle cx="1.5" cy="6.5" r="1" fill="#e84040"/><circle cx="6" cy="6.5" r="1" fill="#5aaae8"/><circle cx="3" cy="8.5" r="1" fill="#f0b030"/><circle cx="7.5" cy="8.5" r="1" fill="#e84040"/></svg>
<div class="a t" style="left:57px;top:184.86px;font-family:'Liberation Sans',sans-serif;font-size:6.9px;color:#1a1a1a;letter-spacing:-0.12px;">00033_ConvertToLas.LiData</div>
<svg style="left:35px;top:194px" width="8" height="8"><rect x=".5" y=".5" width="7" height="7" fill="#e6e8ee" stroke="#a4a4a4" stroke-width="1"/><path d="M2.2 4.2l1.4 1.8L5.8 2" stroke="#2a3a8a" stroke-width="1.2" fill="none"/></svg>
<svg style="left:45px;top:193.0px" width="10" height="10"><circle cx="2" cy="3" r="1" fill="#e84040"/><circle cx="5" cy="1.5" r="1" fill="#5aaae8"/><circle cx="8" cy="3" r="1" fill="#f0b030"/><circle cx="4" cy="5" r="1" fill="#5aaae8"/><circle cx="1.5" cy="6.5" r="1" fill="#e84040"/><circle cx="6" cy="6.5" r="1" fill="#5aaae8"/><circle cx="3" cy="8.5" r="1" fill="#f0b030"/><circle cx="7.5" cy="8.5" r="1" fill="#e84040"/></svg>
<div class="a t" style="left:57px;top:195.0px;font-family:'Liberation Sans',sans-serif;font-size:6.9px;color:#1a1a1a;letter-spacing:-0.12px;">00034_ConvertToLas.LiData</div>
<svg style="left:35px;top:204px" width="8" height="8"><rect x=".5" y=".5" width="7" height="7" fill="#e6e8ee" stroke="#a4a4a4" stroke-width="1"/><path d="M2.2 4.2l1.4 1.8L5.8 2" stroke="#2a3a8a" stroke-width="1.2" fill="none"/></svg>
<svg style="left:45px;top:203.14px" width="10" height="10"><circle cx="2" cy="3" r="1" fill="#e84040"/><circle cx="5" cy="1.5" r="1" fill="#5aaae8"/><circle cx="8" cy="3" r="1" fill="#f0b030"/><circle cx="4" cy="5" r="1" fill="#5aaae8"/><circle cx="1.5" cy="6.5" r="1" fill="#e84040"/><circle cx="6" cy="6.5" r="1" fill="#5aaae8"/><circle cx="3" cy="8.5" r="1" fill="#f0b030"/><circle cx="7.5" cy="8.5" r="1" fill="#e84040"/></svg>
<div class="a t" style="left:57px;top:205.14px;font-family:'Liberation Sans',sans-serif;font-size:6.9px;color:#1a1a1a;letter-spacing:-0.12px;">00035_ConvertToLas.LiData</div>
<svg style="left:35px;top:214px" width="8" height="8"><rect x=".5" y=".5" width="7" height="7" fill="#e6e8ee" stroke="#a4a4a4" stroke-width="1"/><path d="M2.2 4.2l1.4 1.8L5.8 2" stroke="#2a3a8a" stroke-width="1.2" fill="none"/></svg>
<svg style="left:45px;top:213.28px" width="10" height="10"><circle cx="2" cy="3" r="1" fill="#e84040"/><circle cx="5" cy="1.5" r="1" fill="#5aaae8"/><circle cx="8" cy="3" r="1" fill="#f0b030"/><circle cx="4" cy="5" r="1" fill="#5aaae8"/><circle cx="1.5" cy="6.5" r="1" fill="#e84040"/><circle cx="6" cy="6.5" r="1" fill="#5aaae8"/><circle cx="3" cy="8.5" r="1" fill="#f0b030"/><circle cx="7.5" cy="8.5" r="1" fill="#e84040"/></svg>
<div class="a t" style="left:57px;top:215.28px;font-family:'Liberation Sans',sans-serif;font-size:6.9px;color:#1a1a1a;letter-spacing:-0.12px;">20160625-01-01.LiData</div>
<svg style="left:35px;top:224px" width="8" height="8"><rect x=".5" y=".5" width="7" height="7" fill="#e6e8ee" stroke="#a4a4a4" stroke-width="1"/><path d="M2.2 4.2l1.4 1.8L5.8 2" stroke="#2a3a8a" stroke-width="1.2" fill="none"/></svg>
<svg style="left:45px;top:223.42px" width="10" height="10"><circle cx="2" cy="3" r="1" fill="#e84040"/><circle cx="5" cy="1.5" r="1" fill="#5aaae8"/><circle cx="8" cy="3" r="1" fill="#f0b030"/><circle cx="4" cy="5" r="1" fill="#5aaae8"/><circle cx="1.5" cy="6.5" r="1" fill="#e84040"/><circle cx="6" cy="6.5" r="1" fill="#5aaae8"/><circle cx="3" cy="8.5" r="1" fill="#f0b030"/><circle cx="7.5" cy="8.5" r="1" fill="#e84040"/></svg>
<div class="a t" style="left:57px;top:225.42px;font-family:'Liberation Sans',sans-serif;font-size:6.9px;color:#1a1a1a;letter-spacing:-0.12px;">20160625-01-02.LiData</div>
<svg style="left:35px;top:235px" width="8" height="8"><rect x=".5" y=".5" width="7" height="7" fill="#e6e8ee" stroke="#a4a4a4" stroke-width="1"/><path d="M2.2 4.2l1.4 1.8L5.8 2" stroke="#2a3a8a" stroke-width="1.2" fill="none"/></svg>
<svg style="left:45px;top:233.56px" width="10" height="10"><circle cx="2" cy="3" r="1" fill="#e84040"/><circle cx="5" cy="1.5" r="1" fill="#5aaae8"/><circle cx="8" cy="3" r="1" fill="#f0b030"/><circle cx="4" cy="5" r="1" fill="#5aaae8"/><circle cx="1.5" cy="6.5" r="1" fill="#e84040"/><circle cx="6" cy="6.5" r="1" fill="#5aaae8"/><circle cx="3" cy="8.5" r="1" fill="#f0b030"/><circle cx="7.5" cy="8.5" r="1" fill="#e84040"/></svg>
<div class="a t" style="left:57px;top:235.56px;font-family:'Liberation Sans',sans-serif;font-size:6.9px;color:#1a1a1a;letter-spacing:-0.12px;">20160625-01-03.LiData</div>
<svg style="left:35px;top:245px" width="8" height="8"><rect x=".5" y=".5" width="7" height="7" fill="#e6e8ee" stroke="#a4a4a4" stroke-width="1"/><path d="M2.2 4.2l1.4 1.8L5.8 2" stroke="#2a3a8a" stroke-width="1.2" fill="none"/></svg>
<svg style="left:45px;top:243.70000000000002px" width="10" height="10"><circle cx="2" cy="3" r="1" fill="#e84040"/><circle cx="5" cy="1.5" r="1" fill="#5aaae8"/><circle cx="8" cy="3" r="1" fill="#f0b030"/><circle cx="4" cy="5" r="1" fill="#5aaae8"/><circle cx="1.5" cy="6.5" r="1" fill="#e84040"/><circle cx="6" cy="6.5" r="1" fill="#5aaae8"/><circle cx="3" cy="8.5" r="1" fill="#f0b030"/><circle cx="7.5" cy="8.5" r="1" fill="#e84040"/></svg>
<div class="a t" style="left:57px;top:245.70000000000002px;font-family:'Liberation Sans',sans-serif;font-size:6.9px;color:#1a1a1a;letter-spacing:-0.12px;">20160625-01-04.LiData</div>
<svg style="left:35px;top:255px" width="8" height="8"><rect x=".5" y=".5" width="7" height="7" fill="#e6e8ee" stroke="#a4a4a4" stroke-width="1"/><path d="M2.2 4.2l1.4 1.8L5.8 2" stroke="#2a3a8a" stroke-width="1.2" fill="none"/></svg>
<svg style="left:45px;top:253.84000000000003px" width="10" height="10"><circle cx="2" cy="3" r="1" fill="#e84040"/><circle cx="5" cy="1.5" r="1" fill="#5aaae8"/><circle cx="8" cy="3" r="1" fill="#f0b030"/><circle cx="4" cy="5" r="1" fill="#5aaae8"/><circle cx="1.5" cy="6.5" r="1" fill="#e84040"/><circle cx="6" cy="6.5" r="1" fill="#5aaae8"/><circle cx="3" cy="8.5" r="1" fill="#f0b030"/><circle cx="7.5" cy="8.5" r="1" fill="#e84040"/></svg>
<div class="a t" style="left:57px;top:255.84000000000003px;font-family:'Liberation Sans',sans-serif;font-size:6.9px;color:#1a1a1a;letter-spacing:-0.12px;">20160625-01-05.LiData</div>
<svg style="left:35px;top:265px" width="8" height="8"><rect x=".5" y=".5" width="7" height="7" fill="#e6e8ee" stroke="#a4a4a4" stroke-width="1"/><path d="M2.2 4.2l1.4 1.8L5.8 2" stroke="#2a3a8a" stroke-width="1.2" fill="none"/></svg>
<svg style="left:45px;top:263.98px" width="10" height="10"><circle cx="2" cy="3" r="1" fill="#e84040"/><circle cx="5" cy="1.5" r="1" fill="#5aaae8"/><circle cx="8" cy="3" r="1" fill="#f0b030"/><circle cx="4" cy="5" r="1" fill="#5aaae8"/><circle cx="1.5" cy="6.5" r="1" fill="#e84040"/><circle cx="6" cy="6.5" r="1" fill="#5aaae8"/><circle cx="3" cy="8.5" r="1" fill="#f0b030"/><circle cx="7.5" cy="8.5" r="1" fill="#e84040"/></svg>
<div class="a t" style="left:57px;top:265.98px;font-family:'Liberation Sans',sans-serif;font-size:6.9px;color:#1a1a1a;letter-spacing:-0.12px;">20160625-01-06.LiData</div>
<svg style="left:35px;top:275px" width="8" height="8"><rect x=".5" y=".5" width="7" height="7" fill="#e6e8ee" stroke="#a4a4a4" stroke-width="1"/><path d="M2.2 4.2l1.4 1.8L5.8 2" stroke="#2a3a8a" stroke-width="1.2" fill="none"/></svg>
<svg style="left:45px;top:274.12px" width="10" height="10"><circle cx="2" cy="3" r="1" fill="#e84040"/><circle cx="5" cy="1.5" r="1" fill="#5aaae8"/><circle cx="8" cy="3" r="1" fill="#f0b030"/><circle cx="4" cy="5" r="1" fill="#5aaae8"/><circle cx="1.5" cy="6.5" r="1" fill="#e84040"/><circle cx="6" cy="6.5" r="1" fill="#5aaae8"/><circle cx="3" cy="8.5" r="1" fill="#f0b030"/><circle cx="7.5" cy="8.5" r="1" fill="#e84040"/></svg>
<div class="a t" style="left:57px;top:276.12px;font-family:'Liberation Sans',sans-serif;font-size:6.9px;color:#1a1a1a;letter-spacing:-0.12px;">20160625-02-01.LiData</div>
<svg style="left:35px;top:285px" width="8" height="8"><rect x=".5" y=".5" width="7" height="7" fill="#e6e8ee" stroke="#a4a4a4" stroke-width="1"/><path d="M2.2 4.2l1.4 1.8L5.8 2" stroke="#2a3a8a" stroke-width="1.2" fill="none"/></svg>
<svg style="left:45px;top:284.26px" width="10" height="10"><circle cx="2" cy="3" r="1" fill="#e84040"/><circle cx="5" cy="1.5" r="1" fill="#5aaae8"/><circle cx="8" cy="3" r="1" fill="#f0b030"/><circle cx="4" cy="5" r="1" fill="#5aaae8"/><circle cx="1.5" cy="6.5" r="1" fill="#e84040"/><circle cx="6" cy="6.5" r="1" fill="#5aaae8"/><circle cx="3" cy="8.5" r="1" fill="#f0b030"/><circle cx="7.5" cy="8.5" r="1" fill="#e84040"/></svg>
<div class="a t" style="left:57px;top:286.26px;font-family:'Liberation Sans',sans-serif;font-size:6.9px;color:#1a1a1a;letter-spacing:-0.12px;">20160625-02-02.LiData</div>
<svg style="left:35px;top:295px" width="8" height="8"><rect x=".5" y=".5" width="7" height="7" fill="#e6e8ee" stroke="#a4a4a4" stroke-width="1"/><path d="M2.2 4.2l1.4 1.8L5.8 2" stroke="#2a3a8a" stroke-width="1.2" fill="none"/></svg>
<svg style="left:45px;top:294.4px" width="10" height="10"><circle cx="2" cy="3" r="1" fill="#e84040"/><circle cx="5" cy="1.5" r="1" fill="#5aaae8"/><circle cx="8" cy="3" r="1" fill="#f0b030"/><circle cx="4" cy="5" r="1" fill="#5aaae8"/><circle cx="1.5" cy="6.5" r="1" fill="#e84040"/><circle cx="6" cy="6.5" r="1" fill="#5aaae8"/><circle cx="3" cy="8.5" r="1" fill="#f0b030"/><circle cx="7.5" cy="8.5" r="1" fill="#e84040"/></svg>
<div class="a t" style="left:57px;top:296.4px;font-family:'Liberation Sans',sans-serif;font-size:6.9px;color:#1a1a1a;letter-spacing:-0.12px;">20160625-02-03.LiData</div>
<svg style="left:35px;top:306px" width="8" height="8"><rect x=".5" y=".5" width="7" height="7" fill="#e6e8ee" stroke="#a4a4a4" stroke-width="1"/><path d="M2.2 4.2l1.4 1.8L5.8 2" stroke="#2a3a8a" stroke-width="1.2" fill="none"/></svg>
<svg style="left:45px;top:304.53999999999996px" width="10" height="10"><circle cx="2" cy="3" r="1" fill="#e84040"/><circle cx="5" cy="1.5" r="1" fill="#5aaae8"/><circle cx="8" cy="3" r="1" fill="#f0b030"/><circle cx="4" cy="5" r="1" fill="#5aaae8"/><circle cx="1.5" cy="6.5" r="1" fill="#e84040"/><circle cx="6" cy="6.5" r="1" fill="#5aaae8"/><circle cx="3" cy="8.5" r="1" fill="#f0b030"/><circle cx="7.5" cy="8.5" r="1" fill="#e84040"/></svg>
<div class="a t" style="left:57px;top:306.53999999999996px;font-family:'Liberation Sans',sans-serif;font-size:6.9px;color:#1a1a1a;letter-spacing:-0.12px;">20160625-02-04.LiData</div>
<svg style="left:35px;top:316px" width="8" height="8"><rect x=".5" y=".5" width="7" height="7" fill="#e6e8ee" stroke="#a4a4a4" stroke-width="1"/><path d="M2.2 4.2l1.4 1.8L5.8 2" stroke="#2a3a8a" stroke-width="1.2" fill="none"/></svg>
<svg style="left:45px;top:314.68px" width="10" height="10"><circle cx="2" cy="3" r="1" fill="#e84040"/><circle cx="5" cy="1.5" r="1" fill="#5aaae8"/><circle cx="8" cy="3" r="1" fill="#f0b030"/><circle cx="4" cy="5" r="1" fill="#5aaae8"/><circle cx="1.5" cy="6.5" r="1" fill="#e84040"/><circle cx="6" cy="6.5" r="1" fill="#5aaae8"/><circle cx="3" cy="8.5" r="1" fill="#f0b030"/><circle cx="7.5" cy="8.5" r="1" fill="#e84040"/></svg>
<div class="a t" style="left:57px;top:316.68px;font-family:'Liberation Sans',sans-serif;font-size:6.9px;color:#1a1a1a;letter-spacing:-0.12px;">20160625-02-05.LiData</div>
<svg style="left:35px;top:326px" width="8" height="8"><rect x=".5" y=".5" width="7" height="7" fill="#e6e8ee" stroke="#a4a4a4" stroke-width="1"/><path d="M2.2 4.2l1.4 1.8L5.8 2" stroke="#2a3a8a" stroke-width="1.2" fill="none"/></svg>
<svg style="left:45px;top:324.82000000000005px" width="10" height="10"><circle cx="2" cy="3" r="1" fill="#e84040"/><circle cx="5" cy="1.5" r="1" fill="#5aaae8"/><circle cx="8" cy="3" r="1" fill="#f0b030"/><circle cx="4" cy="5" r="1" fill="#5aaae8"/><circle cx="1.5" cy="6.5" r="1" fill="#e84040"/><circle cx="6" cy="6.5" r="1" fill="#5aaae8"/><circle cx="3" cy="8.5" r="1" fill="#f0b030"/><circle cx="7.5" cy="8.5" r="1" fill="#e84040"/></svg>
<div class="a t" style="left:57px;top:326.82000000000005px;font-family:'Liberation Sans',sans-serif;font-size:6.9px;color:#1a1a1a;letter-spacing:-0.12px;">20160625-02-06.LiData</div>
<svg style="left:35px;top:336px" width="8" height="8"><rect x=".5" y=".5" width="7" height="7" fill="#e6e8ee" stroke="#a4a4a4" stroke-width="1"/><path d="M2.2 4.2l1.4 1.8L5.8 2" stroke="#2a3a8a" stroke-width="1.2" fill="none"/></svg>
<svg style="left:45px;top:334.96000000000004px" width="10" height="10"><circle cx="2" cy="3" r="1" fill="#e84040"/><circle cx="5" cy="1.5" r="1" fill="#5aaae8"/><circle cx="8" cy="3" r="1" fill="#f0b030"/><circle cx="4" cy="5" r="1" fill="#5aaae8"/><circle cx="1.5" cy="6.5" r="1" fill="#e84040"/><circle cx="6" cy="6.5" r="1" fill="#5aaae8"/><circle cx="3" cy="8.5" r="1" fill="#f0b030"/><circle cx="7.5" cy="8.5" r="1" fill="#e84040"/></svg>
<div class="a t" style="left:57px;top:336.96000000000004px;font-family:'Liberation Sans',sans-serif;font-size:6.9px;color:#1a1a1a;letter-spacing:-0.12px;">20160625-02-07.LiData</div>
<svg style="left:35px;top:346px" width="8" height="8"><rect x=".5" y=".5" width="7" height="7" fill="#e6e8ee" stroke="#a4a4a4" stroke-width="1"/><path d="M2.2 4.2l1.4 1.8L5.8 2" stroke="#2a3a8a" stroke-width="1.2" fill="none"/></svg>
<svg style="left:45px;top:345.1px" width="10" height="10"><circle cx="2" cy="3" r="1" fill="#e84040"/><circle cx="5" cy="1.5" r="1" fill="#5aaae8"/><circle cx="8" cy="3" r="1" fill="#f0b030"/><circle cx="4" cy="5" r="1" fill="#5aaae8"/><circle cx="1.5" cy="6.5" r="1" fill="#e84040"/><circle cx="6" cy="6.5" r="1" fill="#5aaae8"/><circle cx="3" cy="8.5" r="1" fill="#f0b030"/><circle cx="7.5" cy="8.5" r="1" fill="#e84040"/></svg>
<div class="a t" style="left:57px;top:347.1px;font-family:'Liberation Sans',sans-serif;font-size:6.9px;color:#1a1a1a;letter-spacing:-0.12px;">465964.240_466196.408.LiData</div>
<svg style="left:35px;top:356px" width="8" height="8"><rect x=".5" y=".5" width="7" height="7" fill="#e6e8ee" stroke="#a4a4a4" stroke-width="1"/><path d="M2.2 4.2l1.4 1.8L5.8 2" stroke="#2a3a8a" stroke-width="1.2" fill="none"/></svg>
<svg style="left:45px;top:355.24px" width="10" height="10"><circle cx="2" cy="3" r="1" fill="#e84040"/><circle cx="5" cy="1.5" r="1" fill="#5aaae8"/><circle cx="8" cy="3" r="1" fill="#f0b030"/><circle cx="4" cy="5" r="1" fill="#5aaae8"/><circle cx="1.5" cy="6.5" r="1" fill="#e84040"/><circle cx="6" cy="6.5" r="1" fill="#5aaae8"/><circle cx="3" cy="8.5" r="1" fill="#f0b030"/><circle cx="7.5" cy="8.5" r="1" fill="#e84040"/></svg>
<div class="a t" style="left:57px;top:357.24px;font-family:'Liberation Sans',sans-serif;font-size:6.9px;color:#1a1a1a;letter-spacing:-0.12px;">466277.616_466509.528.LiData</div>
<svg style="left:35px;top:366px" width="8" height="8"><rect x=".5" y=".5" width="7" height="7" fill="#e6e8ee" stroke="#a4a4a4" stroke-width="1"/><path d="M2.2 4.2l1.4 1.8L5.8 2" stroke="#2a3a8a" stroke-width="1.2" fill="none"/></svg>
<svg style="left:45px;top:365.38px" width="10" height="10"><circle cx="2" cy="3" r="1" fill="#e84040"/><circle cx="5" cy="1.5" r="1" fill="#5aaae8"/><circle cx="8" cy="3" r="1" fill="#f0b030"/><circle cx="4" cy="5" r="1" fill="#5aaae8"/><circle cx="1.5" cy="6.5" r="1" fill="#e84040"/><circle cx="6" cy="6.5" r="1" fill="#5aaae8"/><circle cx="3" cy="8.5" r="1" fill="#f0b030"/><circle cx="7.5" cy="8.5" r="1" fill="#e84040"/></svg>
<div class="a t" style="left:57px;top:367.38px;font-family:'Liberation Sans',sans-serif;font-size:6.9px;color:#1a1a1a;letter-spacing:-0.12px;">467221.480_467433.272.LiData</div>
<svg style="left:35px;top:377px" width="8" height="8"><rect x=".5" y=".5" width="7" height="7" fill="#e6e8ee" stroke="#a4a4a4" stroke-width="1"/><path d="M2.2 4.2l1.4 1.8L5.8 2" stroke="#2a3a8a" stroke-width="1.2" fill="none"/></svg>
<svg style="left:45px;top:375.52px" width="10" height="10"><circle cx="2" cy="3" r="1" fill="#e84040"/><circle cx="5" cy="1.5" r="1" fill="#5aaae8"/><circle cx="8" cy="3" r="1" fill="#f0b030"/><circle cx="4" cy="5" r="1" fill="#5aaae8"/><circle cx="1.5" cy="6.5" r="1" fill="#e84040"/><circle cx="6" cy="6.5" r="1" fill="#5aaae8"/><circle cx="3" cy="8.5" r="1" fill="#f0b030"/><circle cx="7.5" cy="8.5" r="1" fill="#e84040"/></svg>
<div class="a t" style="left:57px;top:377.52px;font-family:'Liberation Sans',sans-serif;font-size:6.9px;color:#1a1a1a;letter-spacing:-0.12px;">467541.864_467753.984.LiData</div>
<svg style="left:35px;top:387px" width="8" height="8"><rect x=".5" y=".5" width="7" height="7" fill="#e6e8ee" stroke="#a4a4a4" stroke-width="1"/><path d="M2.2 4.2l1.4 1.8L5.8 2" stroke="#2a3a8a" stroke-width="1.2" fill="none"/></svg>
<svg style="left:45px;top:385.65999999999997px" width="10" height="10"><circle cx="2" cy="3" r="1" fill="#e84040"/><circle cx="5" cy="1.5" r="1" fill="#5aaae8"/><circle cx="8" cy="3" r="1" fill="#f0b030"/><circle cx="4" cy="5" r="1" fill="#5aaae8"/><circle cx="1.5" cy="6.5" r="1" fill="#e84040"/><circle cx="6" cy="6.5" r="1" fill="#5aaae8"/><circle cx="3" cy="8.5" r="1" fill="#f0b030"/><circle cx="7.5" cy="8.5" r="1" fill="#e84040"/></svg>
<div class="a t" style="left:57px;top:387.65999999999997px;font-family:'Liberation Sans',sans-serif;font-size:6.9px;color:#1a1a1a;letter-spacing:-0.12px;">467835.256_468044.504.LiData</div>
<svg style="left:25px;top:397px" width="8" height="8"><rect x=".5" y=".5" width="7" height="7" fill="#e6e8ee" stroke="#a4a4a4" stroke-width="1"/><path d="M2.2 4.2l1.4 1.8L5.8 2" stroke="#2a3a8a" stroke-width="1.2" fill="none"/></svg>
<svg style="left:35px;top:396.30000000000007px" width="9" height="9" viewBox="0 0 14 14"><rect x="1" y="1" width="12" height="12" fill="#9ad0f0"/><path d="M3 1l9 12H3z" fill="#c8d820"/><path d="M3 1l4 12H3z" fill="#60a830"/></svg>
<div class="a t" style="left:47px;top:397.80000000000007px;font-family:'Liberation Sans',sans-serif;font-size:6.9px;color:#1a1a1a;letter-spacing:-0.12px;">Rasters</div>
<svg style="left:25px;top:407px" width="8" height="8"><rect x=".5" y=".5" width="7" height="7" fill="#e6e8ee" stroke="#a4a4a4" stroke-width="1"/><path d="M2.2 4.2l1.4 1.8L5.8 2" stroke="#2a3a8a" stroke-width="1.2" fill="none"/></svg>
<svg style="left:35px;top:406.44000000000005px" width="9" height="9" viewBox="0 0 14 14"><rect x="1" y="1" width="12" height="12" fill="#30a040"/><path d="M2 11l5-4 5 4M7 7l4-5" stroke="#7ad0f0" stroke-width="1.2" fill="none"/></svg>
<div class="a t" style="left:47px;top:407.94000000000005px;font-family:'Liberation Sans',sans-serif;font-size:6.9px;color:#1a1a1a;letter-spacing:-0.12px;">Vectors</div>
<svg style="left:25px;top:417px" width="8" height="8"><rect x=".5" y=".5" width="7" height="7" fill="#e6e8ee" stroke="#a4a4a4" stroke-width="1"/><path d="M2.2 4.2l1.4 1.8L5.8 2" stroke="#2a3a8a" stroke-width="1.2" fill="none"/></svg>
<svg style="left:35px;top:416.58000000000004px" width="9" height="9" viewBox="0 0 14 14"><rect x="1" y="1" width="12" height="12" fill="#d8ecfa" stroke="#9ac" stroke-width=".6"/><path d="M1 4h12M1 7h12M5 1v12" stroke="#9ac" stroke-width=".5"/><path d="M4 12l7-8" stroke="#f0a030" stroke-width="1.6"/></svg>
<div class="a t" style="left:47px;top:418.08000000000004px;font-family:'Liberation Sans',sans-serif;font-size:6.9px;color:#1a1a1a;letter-spacing:-0.12px;">Tables</div>
<svg style="left:25px;top:427px" width="8" height="8"><rect x=".5" y=".5" width="7" height="7" fill="#e6e8ee" stroke="#a4a4a4" stroke-width="1"/><path d="M2.2 4.2l1.4 1.8L5.8 2" stroke="#2a3a8a" stroke-width="1.2" fill="none"/></svg>
<svg style="left:35px;top:426.72px" width="9" height="9" viewBox="0 0 14 14"><path d="M7 1v12M1 7h12M4 4l3-3 3 3M4 10l3 3 3-3" stroke="#777" stroke-width="1" fill="none"/></svg>
<div class="a t" style="left:47px;top:428.22px;font-family:'Liberation Sans',sans-serif;font-size:6.9px;color:#1a1a1a;letter-spacing:-0.12px;">Models</div>
<div class="a" style="left:4px;top:528px;width:151px;height:9px;background:#efefef;border-top:1px solid #e2e2e2"></div>
<div class="a" style="left:14px;top:528px;width:72px;height:9px;background:linear-gradient(#fbfbfb,#e2e2e2 60%,#d6d6d6);border:1px solid #b4b4b4;border-radius:2px"></div>
<svg style="left:47px;top:530px" width="6" height="5"><path d="M.5 0v5M2.5 0v5M4.5 0v5" stroke="#777" stroke-width=".8"/></svg>
<svg style="left:7px;top:530px" width="4" height="5"><path d="M3.5 0v5L0 2.5z" fill="#444"/></svg>
<svg style="left:149px;top:530px" width="4" height="5"><path d="M.5 0v5L4 2.5z" fill="#444"/></svg>
<div class="a" style="left:157px;top:64px;width:722px;height:1.6px;background:#7c7c7c"></div>
<div class="a" style="left:157px;top:64px;width:1.6px;height:474px;background:#888"></div>
<div class="a" style="left:877.8px;top:64px;width:1.2px;height:474px;background:#808080"></div>
<div class="a" style="left:158.5px;top:65.5px;width:718.5px;height:306px;background:#efefef"></div>
<svg style="left:161px;top:68px" width="11" height="11" viewBox="0 0 22 22"><circle cx="11" cy="11" r="10" fill="#58ace6"/><path d="M5 4.5h12M2.5 7.5h17M2.5 14.5h17M5 17.5h12" stroke="#f0f8fe" stroke-width="1.6"/><rect x="0" y="9.5" width="22" height="3.2" fill="#2a7cc0"/><path d="M2 11.1h18" stroke="#e0f0fb" stroke-width="1" stroke-dasharray="1.6 .8"/></svg>
<div class="a t" style="left:172px;top:71px;font-family:'Liberation Mono',monospace;font-size:7.5px;color:#000;letter-spacing:0px;-webkit-text-stroke:0.3px #000;transform:scaleX(0.7111);transform-origin:0 0">Viewer 3D-0[Focus]</div>
<div class="a" style="left:839px;top:68.5px;width:11px;height:10px;border:1px solid #a4a4a4;border-radius:2px;background:linear-gradient(#fdfdfd,#e4e4e4)"></div>
<div class="a" style="left:851.5px;top:68.5px;width:11px;height:10px;border:1px solid #a4a4a4;border-radius:2px;background:linear-gradient(#fdfdfd,#e4e4e4)"></div>
<div class="a" style="left:864px;top:68.5px;width:11px;height:10px;border:1px solid #a4a4a4;border-radius:2px;background:linear-gradient(#fdfdfd,#e4e4e4)"></div>
<div class="a" style="left:842.5px;top:74.5px;width:4px;height:1.5px;background:#222"></div>
<svg style="left:854.5px;top:70.5px" width="6" height="6"><rect x="1.5" y=".5" width="4" height="3" fill="none" stroke="#222" stroke-width="1"/><rect x=".5" y="2.5" width="4" height="3" fill="#f0f0f0" stroke="#222" stroke-width="1"/></svg>
<svg style="left:867px;top:71.0px" width="5" height="5"><path d="M.5 .5l4 4M4.5 .5l-4 4" stroke="#222" stroke-width="1.1"/></svg>
<div class="a" style="left:161px;top:79px;width:714px;height:290px;background:#000;overflow:hidden"></div>
<div class="a" style="left:158.5px;top:369px;width:718.5px;height:169px;background:#e9ecf2"></div>
<div class="a" style="left:158.5px;top:371.5px;width:718.5px;height:1px;background:#c4c8d2"></div>
<div class="a" style="left:158.5px;top:372.5px;width:718.5px;height:14px;background:#dfe2ea"></div>
<svg style="left:167px;top:376px" width="10" height="10" viewBox="0 0 22 22"><circle cx="11" cy="11" r="10" fill="#58ace6"/><path d="M5 4.5h12M2.5 7.5h17M2.5 14.5h17M5 17.5h12" stroke="#f0f8fe" stroke-width="1.6"/><rect x="0" y="9.5" width="22" height="3.2" fill="#2a7cc0"/><path d="M2 11.1h18" stroke="#e0f0fb" stroke-width="1" stroke-dasharray="1.6 .8"/></svg>
<div class="a t" style="left:177px;top:379px;font-family:'Liberation Mono',monospace;font-size:7.5px;color:#000;letter-spacing:0px;-webkit-text-stroke:0.3px #000;transform:scaleX(0.7111);transform-origin:0 0">Profile[Focus]</div>
<div class="a" style="left:841px;top:376px;width:11px;height:10px;border:1px solid #a4a4a4;border-radius:2px;background:linear-gradient(#fdfdfd,#e4e4e4)"></div>
<div class="a" style="left:853.5px;top:376px;width:11px;height:10px;border:1px solid #a4a4a4;border-radius:2px;background:linear-gradient(#fdfdfd,#e4e4e4)"></div>
<div class="a" style="left:866px;top:376px;width:11px;height:10px;border:1px solid #a4a4a4;border-radius:2px;background:linear-gradient(#fdfdfd,#e4e4e4)"></div>
<div class="a" style="left:844.5px;top:382px;width:4px;height:1.5px;background:#222"></div>
<div class="a" style="left:856.5px;top:378px;width:5px;height:5px;border:1px solid #222;border-top-width:2px"></div>
<svg style="left:869px;top:378.5px" width="5" height="5"><path d="M.5 .5l4 4M4.5 .5l-4 4" stroke="#222" stroke-width="1.1"/></svg>
<div class="a" style="left:161px;top:386.5px;width:714px;height:14.5px;background:#535353"></div>
<div class="a" style="left:161px;top:401px;width:714px;height:133.5px;background:#000;overflow:hidden"></div>
<div class="a" style="left:158.5px;top:534.5px;width:718.5px;height:2px;background:#f4f4f4"></div>
<div class="a" style="left:157px;top:536.5px;width:722px;height:1px;background:#7c7c7c"></div>
<svg style="left:161px;top:79px;overflow:hidden" width="714" height="290" viewBox="161 79 714 290"><polygon points="216.0,372.0 216.4,370.5 218.5,369.7 217.4,367.7 219.2,366.7 218.8,365.0 219.2,363.5 219.9,362.2 220.4,360.7 220.2,359.1 223.0,358.5 221.6,356.4 222.4,355.1 222.8,353.6 223.0,352.0 223.5,350.6 224.7,349.4 224.6,347.8 224.8,346.3 225.4,344.9 226.4,343.7 226.9,342.2 228.0,341.0 227.8,339.3 228.0,337.8 228.2,336.3 229.8,335.2 230.6,333.9 230.6,332.3 231.3,330.9 231.2,329.3 231.5,327.8 232.3,326.5 234.0,325.5 233.7,323.8 234.9,322.6 234.5,320.9 235.0,319.5 235.5,318.0 236.3,316.7 236.8,315.3 237.2,313.8 238.1,312.6 237.6,310.8 238.9,309.6 239.5,308.2 239.5,306.6 241.1,305.6 240.0,303.6 241.3,302.5 242.1,301.2 242.3,299.6 242.9,298.2 242.3,296.4 243.4,295.2 246.0,294.5 244.4,292.3 246.0,291.3 245.3,289.5 247.1,288.5 247.4,287.0 247.7,285.5 248.4,284.1 250.9,283.5 249.3,281.3 249.8,279.8 250.4,278.4 251.2,277.1 251.7,275.7 251.4,274.0 252.1,272.7 252.6,271.2 256.3,270.9 253.4,268.3 255.4,267.4 255.6,265.9 255.1,264.1 255.6,262.6 256.5,261.4 256.9,259.9 256.9,258.3 258.7,257.4 258.2,255.6 258.8,254.2 259.0,252.7 260.0,251.4 260.4,249.9 260.5,248.4 260.3,246.7 263.1,246.1 262.4,244.2 263.0,242.9 263.8,241.5 264.0,240.0 265.7,240.3 266.7,238.6 268.3,238.8 269.7,238.1 271.3,238.0 272.4,236.7 274.1,237.1 275.4,236.2 276.9,235.8 278.5,236.0 279.9,235.4 281.4,235.1 282.8,234.6 284.1,233.8 285.6,233.4 287.0,232.8 288.9,234.0 290.0,232.4 291.5,232.4 292.8,231.3 294.3,231.1 295.8,231.0 297.1,229.9 298.6,229.6 300.2,229.7 301.4,228.7 303.1,228.9 304.3,227.8 306.0,228.1 307.2,227.1 309.0,227.6 310.2,226.4 311.6,225.8 312.9,224.9 314.2,224.3 315.8,224.4 317.4,224.2 318.9,224.2 320.0,222.6 321.6,222.6 323.0,222.1 324.5,221.7 325.8,221.1 327.5,221.4 328.8,220.5 330.1,219.5 331.5,218.9 333.1,219.1 334.9,220.1 336.7,220.6 337.6,218.5 338.7,216.8 340.4,217.3 341.8,216.8 343.4,216.8 345.1,217.3 346.5,216.6 347.6,215.2 349.0,214.4 350.5,214.4 352.0,214.0 353.4,213.5 355.0,213.6 356.3,212.8 358.1,213.6 359.3,212.4 361.3,213.6 362.1,211.2 363.6,210.9 365.1,210.5 366.4,209.7 367.9,209.6 369.7,210.5 370.7,208.3 372.5,209.0 373.7,208.1 375.9,210.1 376.6,207.2 377.8,206.0 379.5,206.4 380.9,205.9 382.4,205.5 383.7,204.7 385.2,204.3 386.5,203.5 388.2,204.1 389.7,203.7 391.5,204.6 392.3,201.8 393.8,201.5 395.4,201.9 396.8,201.3 398.2,200.6 399.4,199.5 401.1,199.9 402.4,199.0 403.8,198.3 405.3,198.2 407.0,198.5 408.3,197.7 409.9,197.7 411.2,197.0 412.5,196.0 414.1,196.0 415.5,195.5 417.0,195.2 418.5,195.0 419.7,193.9 421.4,194.3 422.8,193.5 424.0,192.4 425.7,192.9 427.1,192.3 428.5,191.7 429.9,191.0 431.5,191.2 432.6,189.7 434.0,189.1 435.4,188.6 437.4,190.1 438.5,188.3 439.9,187.9 441.2,187.0 442.7,186.6 444.1,186.1 445.7,186.2 447.2,186.2 448.4,184.9 450.1,185.2 451.4,184.3 453.1,184.9 454.5,184.3 455.6,182.8 457.7,184.3 458.7,182.4 460.0,181.5 461.8,182.3 463.3,182.1 464.4,180.7 465.8,180.0 467.2,179.4 468.8,179.5 470.2,179.1 471.6,178.3 473.1,178.2 474.8,178.5 476.0,177.5 477.4,176.9 478.8,176.2 480.1,175.4 481.6,175.1 483.2,175.3 484.8,175.2 486.8,176.7 487.7,174.5 488.6,172.4 490.5,173.4 492.2,173.8 493.4,172.6 494.9,172.2 496.3,171.6 497.5,170.4 499.1,170.6 500.8,171.1 501.8,169.1 503.4,169.3 504.8,168.6 506.9,170.5 507.8,168.1 509.1,167.3 510.7,167.4 512.0,166.4 513.7,166.9 514.9,165.8 516.4,165.4 517.9,165.1 519.2,164.3 521.0,165.2 522.0,163.4 523.6,163.2 525.2,163.5 526.3,161.8 528.1,162.5 529.8,163.1 530.6,160.4 532.3,160.9 534.0,161.3 535.2,160.2 536.5,159.2 538.1,159.3 539.4,158.5 541.1,158.8 542.3,157.5 543.8,157.5 545.3,157.3 546.6,156.1 548.2,156.5 549.5,155.6 551.1,155.5 552.5,155.0 553.9,154.3 555.5,154.5 556.6,153.0 558.3,153.3 559.6,152.5 561.1,152.3 562.6,152.2 564.1,151.7 565.4,151.0 567.0,150.8 568.0,148.9 569.8,150.0 571.2,149.3 572.6,148.8 574.1,148.7 575.5,148.0 577.1,147.9 578.1,146.2 579.9,146.9 581.3,146.4 582.9,146.5 584.1,145.1 586.0,146.2 587.1,144.7 588.7,144.7 589.8,143.3 591.4,143.2 593.0,143.5 594.4,142.9 595.8,142.2 597.4,142.4 598.8,141.7 600.2,141.3 601.4,140.1 602.9,139.9 604.4,139.7 605.8,138.9 607.2,138.6 608.6,137.8 610.2,137.9 611.6,137.3 613.0,137.0 614.4,136.3 615.8,135.7 617.2,135.2 618.8,135.1 620.2,134.8 621.5,134.0 623.0,133.5 624.9,134.6 626.0,133.1 627.6,133.1 628.9,132.4 630.4,132.1 632.0,132.3 633.2,131.0 634.8,131.0 635.9,129.5 637.5,129.4 639.0,129.4 640.6,129.4 641.9,128.4 643.4,128.4 644.8,127.7 646.2,127.3 647.6,126.5 648.9,125.6 650.7,126.4 652.1,125.8 653.4,125.1 654.9,124.6 656.7,125.5 657.8,124.0 659.6,124.6 660.6,122.7 662.3,123.1 663.4,121.7 665.3,122.7 666.3,121.0 668.2,122.0 669.4,120.8 670.7,120.0 671.8,118.2 673.6,119.1 675.0,118.5 676.6,118.6 678.0,118.0 679.6,118.0 680.8,116.9 682.0,115.7 683.6,115.9 685.3,116.2 686.9,116.4 688.0,114.8 689.7,115.2 690.8,113.7 692.4,113.6 693.8,113.1 695.1,112.2 696.7,112.2 698.0,111.3 699.3,110.5 701.2,111.5 702.6,111.0 703.7,109.4 705.5,110.1 706.7,109.1 708.3,109.0 709.5,108.0 711.2,108.3 712.5,107.5 714.2,107.9 715.5,107.0 716.9,106.5 718.3,105.8 719.7,105.2 721.3,105.3 722.9,105.6 723.8,103.3 725.7,104.3 727.0,103.4 728.0,101.6 729.7,102.1 731.2,101.6 732.7,101.6 734.2,101.4 735.6,100.6 737.0,100.2 738.5,99.9 740.0,99.7 741.3,98.7 742.8,98.4 744.0,97.4 745.6,97.4 747.1,97.0 748.4,96.3 750.1,96.7 751.4,95.8 752.6,94.6 754.5,95.5 755.8,94.9 758.1,97.1 758.4,93.0 760.2,93.8 761.8,94.0 763.0,92.6 764.5,92.2 765.8,91.5 767.2,90.9 768.7,90.8 770.2,90.6 771.6,89.8 773.2,89.8 774.5,89.0 776.8,91.4 777.4,88.1 779.0,88.4 780.2,87.0 781.7,87.0 783.1,86.2 784.6,86.2 786.0,85.4 787.3,84.8 788.9,84.8 790.7,85.6 791.5,83.0 793.5,84.4 794.8,83.3 795.9,82.0 797.5,82.1 798.9,81.4 800.4,81.2 801.9,80.9 803.4,80.6 804.8,80.2 806.5,80.5 807.7,79.5 809.3,79.3 810.5,78.2 812.0,78.0 813.5,78.1 815.0,78.7 816.5,78.2 818.0,79.4 819.5,77.4 821.0,78.3 822.5,77.9 824.0,77.9 825.5,77.1 827.0,76.7 828.5,78.1 830.0,79.2 831.5,76.9 833.0,78.6 834.5,78.9 836.0,78.4 837.5,78.5 839.0,78.0 840.5,79.0 842.0,78.0 841.3,79.5 840.9,81.0 841.3,82.6 840.9,84.1 841.9,85.7 841.9,87.2 842.4,88.8 841.9,90.3 841.7,91.9 841.6,93.4 840.5,94.9 841.1,96.5 841.3,98.0 838.8,99.4 840.9,101.1 840.1,102.6 840.8,104.2 841.0,105.7 840.9,107.3 840.8,108.8 840.1,110.3 840.0,111.8 840.4,113.4 840.0,114.9 840.7,116.5 840.0,118.0 838.7,118.8 837.2,119.2 835.7,119.4 834.3,119.8 832.8,120.2 831.4,120.7 829.7,120.2 828.7,122.2 827.2,122.4 825.5,122.0 824.4,123.5 822.7,123.1 821.4,124.0 819.4,122.5 818.5,124.8 817.1,125.3 815.7,125.8 814.5,127.0 813.2,127.6 811.5,127.5 810.0,127.7 808.7,128.4 807.2,128.9 806.1,130.1 804.3,129.6 802.6,129.2 801.5,130.5 800.2,131.5 799.0,132.5 797.4,132.6 795.9,132.8 794.4,133.1 792.8,132.8 791.5,133.9 790.2,134.5 788.7,135.0 787.7,136.5 785.8,135.6 784.5,136.6 783.2,137.3 781.8,137.8 780.5,138.6 778.7,138.1 777.5,139.4 775.8,138.9 773.7,137.3 772.8,139.5 771.5,140.4 770.2,141.0 768.2,139.8 767.3,141.9 765.5,141.3 764.7,143.7 762.9,143.0 761.2,142.6 759.9,143.4 759.0,145.4 757.3,145.2 755.9,145.7 754.7,146.8 753.3,147.4 751.6,147.0 750.2,147.5 748.7,147.7 747.2,148.1 746.0,149.1 744.7,150.0 743.4,150.9 741.4,149.5 740.5,151.7 738.7,151.1 737.5,152.2 736.0,152.4 734.4,152.2 733.2,153.5 731.7,153.7 730.3,154.2 728.8,154.6 727.5,155.5 726.0,155.5 724.7,156.4 723.1,156.4 721.5,156.3 720.4,157.6 718.9,158.1 717.4,158.3 716.3,159.6 714.9,160.2 713.0,159.3 711.7,160.0 710.3,160.8 709.1,161.7 707.5,161.8 706.3,162.8 704.6,162.5 703.3,163.4 701.9,164.0 700.2,163.7 699.1,165.2 697.8,165.8 696.0,165.2 695.0,166.9 693.2,166.2 691.9,167.2 690.2,166.7 688.9,167.7 687.5,168.0 686.1,168.6 684.6,168.9 683.3,169.8 681.9,170.4 680.8,171.7 678.7,170.3 677.7,171.9 676.1,172.0 674.4,171.5 673.2,172.6 671.9,173.7 670.6,174.5 668.9,174.0 667.4,174.4 666.0,175.0 664.8,176.1 663.4,176.6 661.9,176.6 660.4,177.2 659.3,178.5 657.7,178.5 656.3,179.1 654.7,178.8 653.3,179.3 652.0,180.3 650.6,180.8 649.2,181.4 647.8,181.8 646.1,181.7 644.6,181.8 643.4,182.9 641.9,183.3 640.5,183.6 639.5,185.4 637.9,185.3 636.4,185.5 635.0,186.3 633.6,186.9 631.9,186.4 630.6,187.3 629.1,187.6 627.8,188.3 626.2,188.2 624.5,187.9 623.7,190.2 621.9,189.6 620.6,190.3 618.9,190.1 617.7,191.2 616.0,191.0 614.7,191.8 613.3,192.2 612.2,193.9 610.6,193.6 609.3,194.6 607.6,194.1 606.5,195.5 604.9,195.5 603.4,195.9 602.2,196.9 600.7,197.3 599.1,197.2 597.5,197.2 596.4,198.4 595.0,199.1 593.4,198.9 592.2,200.1 590.8,200.7 589.0,200.0 587.7,201.0 586.2,201.2 584.7,201.5 583.3,202.0 582.2,203.4 580.6,203.4 579.2,203.8 577.7,204.0 576.1,204.2 574.8,205.0 573.7,206.4 571.9,205.8 570.9,207.4 569.4,207.6 568.1,208.4 566.3,207.9 565.2,209.2 563.1,207.8 562.0,209.3 560.9,210.8 559.3,210.6 557.6,210.2 556.5,211.6 555.2,212.5 553.9,213.3 552.1,212.8 550.8,213.5 549.1,213.3 547.9,214.3 546.7,215.6 544.7,214.2 543.6,215.7 542.3,216.4 541.0,217.3 539.1,216.5 538.2,218.5 536.6,218.3 535.3,219.2 533.6,218.9 532.2,219.4 531.0,220.5 529.8,221.8 528.0,221.1 526.6,221.7 525.0,221.6 523.3,221.3 522.5,223.5 520.9,223.5 519.3,223.4 517.8,223.7 516.7,225.1 515.0,224.7 513.9,226.1 512.4,226.4 511.1,227.3 509.5,227.4 508.2,228.1 506.6,228.0 505.1,228.4 503.8,229.3 502.5,229.9 501.0,230.3 499.5,230.6 498.1,231.1 496.5,230.9 494.9,231.0 493.7,232.1 492.7,233.7 490.8,232.8 489.8,234.7 488.3,234.8 486.7,234.9 485.2,235.0 483.3,233.9 482.4,236.0 480.9,236.3 479.6,237.1 477.9,236.7 476.7,237.9 475.2,238.4 473.8,238.8 472.3,238.9 471.2,240.4 469.6,240.4 468.3,241.3 466.5,240.5 465.4,241.9 463.8,242.1 462.5,242.8 460.9,242.7 459.0,241.9 458.3,244.5 456.8,244.8 455.3,244.9 454.0,245.9 452.6,246.4 451.0,246.2 449.6,246.8 447.6,245.7 446.9,248.1 445.6,249.2 443.6,247.9 442.5,249.4 441.4,250.6 439.5,249.8 438.5,251.5 437.0,251.7 435.3,251.2 434.0,252.1 431.7,250.2 431.4,253.9 429.5,253.1 428.4,254.4 426.7,254.2 425.6,255.6 423.8,254.8 422.5,255.5 421.1,256.3 420.1,257.9 418.4,257.5 417.0,258.2 415.4,258.2 414.3,259.5 412.5,258.8 411.4,260.4 409.5,259.3 408.5,261.1 407.0,261.3 405.5,261.6 404.1,262.1 402.7,262.9 400.5,260.8 399.8,263.4 398.2,263.3 396.8,263.9 395.6,265.1 394.1,265.4 392.3,264.8 391.2,266.2 389.8,266.7 388.1,266.3 386.9,267.5 385.8,268.9 384.0,268.2 382.6,268.9 381.0,268.9 379.7,269.8 377.6,268.0 377.1,271.2 375.2,270.5 373.8,271.0 372.9,273.1 371.6,273.7 369.9,273.5 368.4,273.6 367.0,274.2 365.5,274.5 363.9,274.3 362.3,274.3 361.3,276.2 360.0,276.9 358.4,277.0 357.4,278.6 355.8,278.6 354.3,278.9 352.7,278.9 351.2,279.1 349.9,279.8 347.8,278.3 347.0,280.7 345.6,281.1 343.9,280.8 342.9,282.6 341.4,282.9 339.9,283.1 338.6,284.0 337.2,284.4 335.9,285.2 334.2,284.9 332.6,284.8 331.3,285.7 329.9,286.2 328.6,287.2 327.1,287.5 325.4,286.9 324.4,288.7 322.8,288.7 321.3,289.1 320.0,289.7 318.5,290.0 317.0,290.1 315.7,291.0 314.1,291.2 312.8,291.9 311.5,292.6 310.0,293.0 308.7,294.1 308.5,295.7 307.4,296.8 307.5,298.5 306.1,299.6 306.4,301.3 306.8,303.1 304.8,303.9 304.4,305.4 303.8,306.8 303.4,308.2 302.7,309.6 302.6,311.2 301.6,312.4 301.3,313.9 301.3,315.5 299.2,316.3 299.0,317.8 297.9,319.0 297.8,320.6 295.0,321.1 297.3,323.7 296.0,324.8 295.9,326.4 295.3,327.7 294.3,328.9 293.3,330.2 293.3,331.8 292.2,333.0 291.6,334.4 291.8,336.1 290.3,337.1 289.5,338.4 289.4,340.0 289.7,341.8 286.4,342.0 287.9,344.3 287.0,345.5 286.7,347.0 286.2,348.5 285.5,349.8 284.9,351.2 285.1,352.9 283.9,354.0 283.2,355.4 282.7,356.8 282.3,358.3 281.4,359.5 280.4,360.7 279.7,362.1 280.3,364.0 279.3,365.2 278.0,366.3 278.0,367.9 277.6,369.4 276.7,370.6 276.0,372.0 274.5,372.2 273.0,371.7 271.5,371.1 270.0,372.1 268.5,371.9 267.0,372.1 265.5,371.7 264.0,372.2 262.5,371.3 261.0,371.5 259.5,371.7 258.0,372.0 256.5,371.3 255.0,372.3 253.5,371.9 252.0,372.1 250.5,372.2 249.0,372.4 247.5,372.3 246.0,372.3 244.5,371.6 243.0,372.1 241.5,371.5 240.0,371.5 238.5,372.1 237.0,371.4 235.5,371.8 234.0,371.8 232.5,372.1 231.0,371.6 229.5,371.6 228.0,372.6 226.5,371.8 225.0,371.2 223.5,372.4 222.0,372.4 220.5,371.9 219.0,371.4 217.5,371.5" fill="#fff"/><polygon points="282,260 612,155 620,181 290,284" fill="#dce8f3" stroke="#f0c020" stroke-width="1.3" stroke-dasharray="3.5 3"/><path d="M293 263L836 96M293 272L836 107M248 372L291 265M258 372L297 272" stroke="#2a34e8" stroke-width="2.6" fill="none"/><path d="M295 269L360 250.5L440 221L607 172" stroke="#e0505a" stroke-width="1.5" fill="none"/><path d="M289 266l3-4 5 0 2 3 4 1 0 5-3 2-1 4-5 0-2-3-3-2z" fill="#e05060"/><path d="M603 166l6-1 2 3 2 0v4l-2 1v3l-6 1-2-3z" fill="#e05060"/><rect x="349.5" y="255.7" width="2" height="1" fill="#222"/><rect x="384.4" y="243.6" width="1" height="1" fill="#222"/><rect x="542.4" y="191.3" width="2" height="1" fill="#222"/><rect x="458.3" y="217.5" width="1" height="1" fill="#222"/><rect x="411.3" y="232.3" width="1" height="1" fill="#222"/><rect x="343.5" y="258.2" width="1" height="1" fill="#222"/><rect x="508.2" y="200.9" width="2" height="1" fill="#222"/><rect x="531.2" y="194.0" width="1" height="1" fill="#222"/><rect x="310.2" y="268.2" width="1" height="1" fill="#222"/><rect x="508.2" y="202.1" width="1" height="1" fill="#222"/><rect x="307.0" y="271.6" width="1" height="1" fill="#222"/><rect x="337.5" y="261.4" width="1" height="1" fill="#222"/><rect x="348.3" y="256.3" width="1" height="1" fill="#222"/><rect x="445.4" y="217.9" width="1" height="1" fill="#222"/><rect x="441.0" y="222.7" width="1" height="1" fill="#222"/><rect x="534.1" y="192.0" width="2" height="1" fill="#222"/><rect x="526.4" y="197.3" width="2" height="1" fill="#222"/><rect x="596.6" y="172.9" width="2" height="1" fill="#222"/><rect x="442.9" y="222.2" width="1" height="1" fill="#222"/><rect x="402.4" y="233.2" width="2" height="1" fill="#222"/><rect x="422.9" y="226.8" width="1" height="1" fill="#222"/><rect x="450.4" y="217.2" width="1" height="1" fill="#222"/><rect x="416.0" y="227.5" width="1" height="1" fill="#222"/><rect x="347.7" y="256.5" width="1" height="1" fill="#222"/><rect x="300.8" y="270.2" width="2" height="1" fill="#222"/><rect x="524.5" y="194.9" width="2" height="1" fill="#222"/><rect x="395.6" y="240.3" width="1" height="1" fill="#222"/><rect x="354.2" y="251.1" width="1" height="1" fill="#222"/><rect x="550.1" y="188.0" width="2" height="1" fill="#222"/><rect x="578.9" y="179.1" width="1" height="1" fill="#222"/><rect x="319.7" y="267.3" width="1" height="1" fill="#222"/><rect x="412.5" y="232.4" width="2" height="1" fill="#222"/><rect x="455.9" y="217.5" width="1" height="1" fill="#222"/><rect x="422.1" y="230.5" width="2" height="1" fill="#222"/><rect x="477.2" y="212.5" width="1" height="1" fill="#222"/><rect x="451.8" y="218.7" width="1" height="1" fill="#222"/><rect x="348.7" y="252.6" width="1" height="1" fill="#222"/><rect x="532.2" y="194.1" width="1" height="1" fill="#222"/><rect x="315.7" y="265.8" width="1" height="1" fill="#222"/><rect x="310.4" y="267.7" width="1" height="1" fill="#222"/><rect x="401.1" y="228.9" width="1" height="1" fill="#333"/><rect x="477.1" y="209.1" width="1" height="1" fill="#333"/><rect x="624.4" y="145.7" width="1" height="1" fill="#333"/><rect x="271.6" y="280.2" width="1" height="1" fill="#333"/><rect x="413.4" y="212.2" width="1" height="1" fill="#333"/><rect x="837.5" y="98.8" width="1" height="1" fill="#333"/><rect x="745.8" y="125.7" width="1" height="1" fill="#333"/><rect x="632.1" y="146.7" width="1" height="1" fill="#333"/><rect x="629.7" y="174.0" width="1" height="1" fill="#333"/><rect x="565.4" y="188.4" width="1" height="1" fill="#333"/><rect x="650.7" y="138.2" width="1" height="1" fill="#333"/><rect x="700.7" y="142.8" width="1" height="1" fill="#333"/><rect x="437.5" y="196.8" width="1" height="1" fill="#333"/><rect x="762.5" y="120.7" width="1" height="1" fill="#333"/><rect x="678.0" y="159.9" width="1" height="1" fill="#333"/><rect x="675.3" y="162.2" width="1" height="1" fill="#333"/><rect x="491.5" y="212.8" width="1" height="1" fill="#333"/><rect x="520.1" y="209.6" width="1" height="1" fill="#333"/><rect x="770.2" y="105.8" width="1" height="1" fill="#333"/><rect x="342.3" y="231.7" width="1" height="1" fill="#333"/><rect x="820.1" y="102.7" width="1" height="1" fill="#333"/><rect x="624.9" y="154.3" width="1" height="1" fill="#333"/><rect x="556.2" y="177.3" width="1" height="1" fill="#333"/><rect x="466.1" y="211.5" width="1" height="1" fill="#333"/><rect x="600.5" y="184.1" width="1" height="1" fill="#333"/><rect x="305.1" y="288.8" width="1" height="1" fill="#222"/><rect x="314.6" y="267.5" width="1" height="1" fill="#222"/><rect x="260.6" y="290.1" width="1" height="1" fill="#222"/><rect x="313.3" y="267.0" width="1" height="1" fill="#222"/><rect x="293.3" y="261.6" width="1" height="1" fill="#222"/><rect x="265.3" y="284.9" width="1" height="1" fill="#222"/><rect x="290.7" y="270.5" width="1" height="1" fill="#222"/><rect x="236.7" y="337.2" width="1" height="1" fill="#222"/><rect x="314.5" y="267.8" width="1" height="1" fill="#222"/><rect x="275.9" y="361.2" width="1" height="1" fill="#222"/><rect x="247.9" y="321.9" width="1" height="1" fill="#222"/><rect x="281.5" y="336.1" width="1" height="1" fill="#222"/><rect x="263.3" y="265.5" width="1" height="1" fill="#222"/><rect x="251.1" y="297.0" width="1" height="1" fill="#222"/><rect x="272.3" y="284.4" width="1" height="1" fill="#222"/><rect x="314.9" y="264.5" width="1" height="1" fill="#222"/><rect x="303.1" y="310.3" width="1" height="1" fill="#222"/><rect x="238.7" y="334.2" width="1" height="1" fill="#222"/><rect x="249.6" y="298.8" width="1" height="1" fill="#222"/><rect x="254.7" y="347.9" width="1" height="1" fill="#222"/><rect x="257.4" y="297.5" width="1" height="1" fill="#222"/><rect x="278.7" y="366.8" width="1" height="1" fill="#222"/><rect x="294.1" y="333.7" width="1" height="1" fill="#222"/><rect x="282.6" y="262.6" width="1" height="1" fill="#222"/><rect x="272.6" y="315.8" width="1" height="1" fill="#222"/><rect x="284.4" y="293.4" width="1" height="1" fill="#222"/><rect x="282.5" y="303.8" width="1" height="1" fill="#222"/><rect x="291.4" y="257.2" width="1" height="1" fill="#222"/><rect x="283.6" y="319.4" width="1" height="1" fill="#222"/><rect x="249.6" y="343.0" width="1" height="1" fill="#222"/><rect x="253.3" y="302.4" width="1" height="2" fill="#111"/><rect x="264.1" y="304.7" width="1" height="2" fill="#111"/><rect x="262.4" y="307.8" width="1" height="1" fill="#111"/><rect x="252.9" y="300.1" width="1" height="1" fill="#111"/><rect x="252.4" y="312.8" width="1" height="1" fill="#111"/><rect x="253.0" y="305.6" width="1" height="1" fill="#111"/><rect x="257.5" y="302.9" width="1" height="1" fill="#111"/><rect x="263.9" y="303.6" width="1" height="1" fill="#111"/><rect x="245.1" y="348.5" width="1" height="2" fill="#111"/><rect x="243.5" y="348.6" width="1" height="1" fill="#111"/><rect x="245.4" y="349.9" width="1" height="1" fill="#111"/><rect x="247.3" y="349.4" width="1" height="1" fill="#111"/><rect x="242.5" y="359.9" width="1" height="2" fill="#111"/><rect x="249.0" y="346.1" width="1" height="1" fill="#111"/><rect x="250.7" y="347.8" width="1" height="1" fill="#111"/><rect x="243.9" y="353.6" width="1" height="1" fill="#111"/><rect x="247.9" y="348.8" width="1" height="1" fill="#111"/><rect x="243.3" y="355.2" width="1" height="1" fill="#111"/><rect x="239.8" y="346.4" width="1" height="1" fill="#111"/><rect x="242.3" y="356.9" width="1" height="1" fill="#111"/><rect x="244.2" y="347.6" width="1" height="1" fill="#111"/><rect x="244.6" y="348.7" width="1" height="1" fill="#111"/><rect x="288.6" y="310.8" width="1" height="1" fill="#111"/><rect x="292.0" y="312.8" width="1" height="1" fill="#111"/><rect x="279.5" y="317.4" width="1" height="1" fill="#111"/><rect x="287.4" y="312.7" width="1" height="1" fill="#111"/><rect x="287.2" y="314.0" width="1" height="1" fill="#111"/><rect x="282.9" y="315.1" width="1" height="2" fill="#111"/><rect x="285.0" y="316.5" width="1" height="2" fill="#111"/><rect x="284.9" y="304.9" width="1" height="1" fill="#111"/><rect x="294.4" y="314.2" width="1" height="1" fill="#111"/><rect x="286.2" y="316.6" width="1" height="1" fill="#111"/><rect x="303.2" y="328.2" width="1" height="2" fill="#111"/><rect x="296.7" y="329.0" width="1" height="1" fill="#111"/><rect x="297.5" y="336.7" width="1" height="2" fill="#111"/><rect x="303.6" y="334.9" width="1" height="1" fill="#111"/><rect x="300.7" y="331.1" width="1" height="2" fill="#111"/><rect x="296.0" y="329.1" width="1" height="1" fill="#111"/><rect x="274.8" y="351.3" width="1" height="1" fill="#111"/><rect x="271.0" y="356.2" width="1" height="1" fill="#111"/><rect x="280.7" y="354.3" width="1" height="1" fill="#111"/><rect x="273.6" y="357.4" width="1" height="2" fill="#111"/><rect x="273.0" y="354.2" width="1" height="1" fill="#111"/><rect x="278.3" y="357.7" width="1" height="1" fill="#111"/><rect x="278.9" y="356.5" width="1" height="1" fill="#111"/><rect x="260.4" y="359.4" width="1" height="1" fill="#111"/><rect x="279.3" y="354.3" width="1" height="1" fill="#111"/><rect x="273.7" y="351.8" width="1" height="1" fill="#111"/><rect x="261.0" y="333.9" width="1" height="1" fill="#111"/><rect x="267.6" y="334.8" width="1" height="2" fill="#111"/><rect x="267.4" y="328.6" width="1" height="1" fill="#111"/><rect x="263.7" y="328.1" width="1" height="1" fill="#111"/><rect x="261.0" y="336.9" width="1" height="2" fill="#111"/><rect x="257.5" y="335.4" width="1" height="1" fill="#111"/><rect x="290.0" y="294.4" width="1" height="1" fill="#111"/><rect x="287.9" y="304.7" width="1" height="1" fill="#111"/><rect x="293.6" y="297.3" width="1" height="2" fill="#111"/><rect x="289.9" y="290.2" width="1" height="1" fill="#111"/><rect x="288.9" y="295.7" width="1" height="1" fill="#111"/><rect x="285.2" y="301.1" width="1" height="1" fill="#111"/><rect x="232.9" y="361.1" width="1" height="2" fill="#111"/><rect x="230.7" y="359.3" width="1" height="1" fill="#111"/><rect x="234.4" y="368.6" width="1" height="1" fill="#111"/><rect x="230.5" y="371.2" width="1" height="2" fill="#111"/><rect x="231.4" y="366.2" width="1" height="1" fill="#111"/><rect x="230.1" y="364.4" width="1" height="1" fill="#111"/><rect x="236.2" y="368.6" width="1" height="1" fill="#111"/><rect x="234.7" y="366.6" width="1" height="2" fill="#111"/><rect x="415" y="215" width="6" height="2" fill="#50d070"/><rect x="520" y="179" width="2" height="2" fill="#50d070"/><rect x="162" y="281" width="11" height="22" fill="#0000ff"/><rect x="162" y="303" width="11" height="20" fill="#ff0000"/><rect x="162" y="323" width="11" height="21" fill="#3cd264"/><rect x="162" y="344" width="11" height="23" fill="#ffffff"/><path d="M851 110V92" stroke="#00e000" stroke-width="1.2"/><path d="M849 95l2-3 2 3z" fill="#00e000"/><path d="M849 86h4l-2 3v2" stroke="#00e000" stroke-width=".9" fill="none"/><path d="M851 110h10" stroke="#ff1010" stroke-width="1.2"/><rect x="850" y="108" width="3" height="3" fill="#1030ff"/><path d="M863 104l3 3M866 104l-3 3" stroke="#ff1010" stroke-width=".8"/><path d="M850 101h2M850 104h2" stroke="#1030ff" stroke-width=".8"/></svg>
<div class="a t" style="left:162px;top:266px;font-family:'Liberation Mono',monospace;font-size:7.2px;color:#d8d8d8;letter-spacing:0px;;-webkit-text-stroke:0;transform:scaleX(0.8218);transform-origin:0 0">Classification(s)</div>
<div class="a t" style="left:173px;top:288px;font-family:'Liberation Mono',monospace;font-size:7.2px;color:#d8d8d8;letter-spacing:0px;;-webkit-text-stroke:0;transform:scaleX(0.8218);transform-origin:0 0">Reserved14</div>
<div class="a t" style="left:173px;top:309px;font-family:'Liberation Mono',monospace;font-size:7.2px;color:#d8d8d8;letter-spacing:0px;;-webkit-text-stroke:0;transform:scaleX(0.8218);transform-origin:0 0">Reserved13</div>
<div class="a t" style="left:173px;top:330px;font-family:'Liberation Mono',monospace;font-size:7.2px;color:#d8d8d8;letter-spacing:0px;;-webkit-text-stroke:0;transform:scaleX(0.8218);transform-origin:0 0">High Vegetation</div>
<div class="a t" style="left:173px;top:351px;font-family:'Liberation Mono',monospace;font-size:7.2px;color:#d8d8d8;letter-spacing:0px;;-webkit-text-stroke:0;transform:scaleX(0.8218);transform-origin:0 0">UnClassified</div>
<svg style="left:161px;top:386px" width="714" height="16" viewBox="161 386 714 16"><rect x="165.5" y="393" width="9" height="6.5" rx="1" fill="#f0c040"/><path d="M167.5 393v-2.5a2.5 2.5 0 0 1 5 0V393" stroke="#ddd" stroke-width="1.3" fill="none"/><path d="M184 399l6-6" stroke="#e89030" stroke-width="1.8"/><path d="M188 390l5 1.5-1.5 2-4-1.5z" fill="#bbb"/><rect x="198" y="389" width="37" height="11" fill="#fff" stroke="#aaa" stroke-width=".6"/><rect x="228" y="389.5" width="6.5" height="10" fill="#eef" stroke="#ccc" stroke-width=".5"/><path d="M230 393l1.3-1.5 1.3 1.5zM230 396l1.3 1.5 1.3-1.5z" fill="#3a5ad0"/><path d="M239 391l3-3h9v10l-3 3h-9z" fill="#f4f8fc" stroke="#bbc" stroke-width=".6"/><path d="M239 391h9v10M248 391l3-3" fill="none" stroke="#aab" stroke-width=".6"/><rect x="250" y="399" width="2" height="2" fill="#111"/><path d="M262 390l3-2 4 1 1 4-2 3-4 0-2-3z" fill="#3a8ad8"/><path d="M268 396l2 3" stroke="#999" stroke-width=".8"/><rect x="278" y="389" width="9" height="8" fill="#5a8ac8" stroke="#8ab" stroke-width=".6" stroke-dasharray="1 .5"/><path d="M286 396l2 3" stroke="#999" stroke-width=".8"/><path d="M297 400l12-10" stroke="#e89020" stroke-width="1.6"/><path d="M299 392l2.2-3 2.2 3z" fill="#30c030"/><path d="M301.2 392v3" stroke="#30c030" stroke-width="1.2"/><path d="M316 400l12-10" stroke="#e89020" stroke-width="1.6"/><path d="M323 396l2.2 3 2.2-3z" fill="#30c030"/><path d="M325.2 393v3" stroke="#30c030" stroke-width="1.2"/><path d="M335 399l3-3 2 2 3-4 2 2 3-3" stroke="#e89020" stroke-width="1" fill="none"/><path d="M340 391l2-3 2 3z" fill="#30c030"/><path d="M354 396l3-3 2 2 3-4 2 2 3-3" stroke="#e89020" stroke-width="1" fill="none"/><path d="M356 397l2 3 2-3z" fill="#30c030"/><rect x="375" y="388" width="11" height="11" fill="#e6eef6" stroke="#7a9ac8" stroke-width=".8"/><rect x="376" y="389" width="4" height="9" fill="#3a6ad0"/><path d="M381 393h4M383 391v7" stroke="#3a6ad0" stroke-width=".7"/><path d="M380 400h7" stroke="#c02020" stroke-width="1"/><path d="M394 401l3-5 4 2-2 3z" fill="#f0c030"/><path d="M398 397l3-8" stroke="#c08020" stroke-width="1.2"/></svg>
<div class="a t" style="left:201px;top:391.5px;font-family:'Liberation Sans',sans-serif;font-size:7.6px;color:#202020;letter-spacing:0px;">15.00</div>
<svg style="left:161px;top:401px;overflow:hidden" width="714" height="133.5" viewBox="161 401 714 133.5"><polygon points="161.0,508.5 163.0,507.9 165.0,507.7 167.0,508.2 169.0,506.4 171.0,506.0 173.0,505.7 175.0,505.0 177.1,503.7 179.2,504.2 181.2,504.0 183.3,504.1 185.4,501.7 187.5,501.8 189.6,500.8 191.7,502.3 193.8,501.6 195.8,499.3 197.9,501.5 200.0,499.7 202.0,500.8 204.0,499.8 206.0,499.5 208.0,498.0 210.0,497.4 212.0,498.7 214.0,497.2 216.0,497.4 218.0,497.3 220.0,496.5 222.0,497.6 224.0,497.3 226.0,498.3 228.0,497.2 230.0,497.3 232.0,496.7 234.0,497.0 236.0,496.3 238.0,495.6 240.0,496.0 242.0,497.3 244.0,497.1 246.0,496.6 248.0,496.0 250.0,494.8 252.0,494.4 254.0,494.5 256.0,493.7 258.0,495.5 260.0,494.4 262.0,495.5 264.0,494.1 266.0,495.5 268.0,495.1 270.0,492.6 272.0,493.1 274.0,494.9 276.0,493.5 278.0,494.8 280.0,493.0 282.0,492.0 284.0,493.4 286.0,493.7 288.0,492.2 290.0,491.5 292.0,492.1 294.0,493.7 296.0,493.0 298.0,491.1 300.0,492.0 302.0,491.3 304.0,490.8 306.0,490.7 308.0,492.7 310.0,490.9 312.0,492.0 314.0,491.6 316.0,490.9 318.0,492.3 320.0,490.6 322.0,492.0 324.0,490.5 326.0,491.3 328.0,490.7 330.0,490.9 332.0,492.8 334.0,492.3 336.0,490.9 338.0,492.4 340.0,490.5 342.0,491.0 344.0,492.3 346.0,491.6 348.0,490.1 350.0,492.5 352.0,490.3 354.0,490.4 356.0,491.8 358.0,490.6 360.0,491.0 362.0,490.5 364.0,490.0 366.0,490.1 368.0,491.5 370.0,490.7 372.0,491.7 374.0,491.2 376.0,491.5 378.0,493.0 380.0,491.7 382.0,492.0 384.0,492.9 386.0,491.1 388.0,491.1 390.0,493.3 392.0,493.1 394.0,491.6 396.0,491.5 398.0,493.1 400.0,492.5 402.0,493.7 404.0,491.5 406.0,493.6 408.0,493.3 410.0,492.5 412.0,491.9 414.0,491.0 416.0,490.7 418.0,493.3 420.0,491.2 422.0,492.4 424.0,491.1 426.0,492.6 428.0,491.9 430.0,491.0 432.0,490.6 434.0,492.1 436.0,490.2 438.0,490.6 440.0,491.5 442.0,492.2 444.0,491.5 446.0,490.5 448.0,492.2 450.0,491.0 452.0,490.2 454.0,489.7 456.0,490.5 458.0,491.0 460.0,490.0 462.0,490.3 464.0,490.9 466.0,491.5 468.0,490.3 470.0,491.0 472.0,492.5 474.0,492.8 476.0,492.0 478.0,492.1 480.0,491.8 482.0,490.6 484.0,490.4 486.0,490.4 488.0,492.9 490.0,492.4 492.0,493.1 494.0,490.5 496.0,492.3 498.0,491.9 500.0,492.0 502.0,492.6 504.0,491.4 506.0,493.3 508.0,490.7 510.0,491.9 512.0,492.4 514.0,492.8 516.0,492.3 518.0,492.2 520.0,492.4 522.0,492.7 524.0,491.1 526.0,492.0 528.0,492.6 530.0,492.4 532.0,491.1 534.0,492.1 536.0,492.3 538.0,491.4 540.0,491.5 542.0,490.8 544.0,491.4 546.0,491.4 548.0,489.9 550.0,491.0 552.0,491.3 554.0,492.3 556.0,491.9 558.0,491.4 560.0,490.4 562.0,491.3 564.0,490.8 566.0,490.4 568.0,491.4 570.0,489.3 572.0,491.1 574.0,489.0 576.0,490.6 578.0,490.2 580.0,489.4 582.0,490.7 584.0,490.0 586.0,490.3 588.0,491.1 590.0,489.2 592.0,488.5 594.0,489.2 596.0,490.2 598.0,488.8 600.0,489.6 602.0,488.6 604.0,490.6 606.0,489.8 608.0,489.1 610.0,490.3 612.0,488.6 614.0,489.5 616.0,488.1 618.0,488.6 620.0,489.6 622.0,489.8 624.0,489.7 626.0,488.2 628.0,488.7 630.0,487.8 632.0,487.2 634.0,488.2 636.0,489.0 638.0,488.0 640.3,488.1 642.7,486.9 645.0,485.5 647.3,487.3 649.7,485.9 652.0,487.0 654.0,487.8 656.0,490.4 658.0,491.6 660.0,494.0 662.0,493.3 664.0,494.1 666.0,494.8 668.0,494.6 670.0,494.2 672.0,495.8 674.0,496.4 676.0,495.1 678.0,494.2 680.0,494.2 682.0,496.7 684.0,494.5 686.0,496.5 688.0,496.3 690.0,495.7 692.0,497.2 694.0,495.2 696.0,495.7 698.0,496.7 700.0,497.0 702.0,495.4 704.0,497.5 706.0,495.6 708.0,495.1 710.0,494.6 712.0,496.0 714.0,495.2 716.0,495.5 718.0,495.4 720.0,494.7 722.0,495.3 724.0,495.5 726.0,494.5 728.0,492.8 730.0,493.4 732.0,492.3 734.0,491.5 736.0,492.6 738.0,493.0 740.0,491.3 742.0,491.3 744.0,491.2 746.0,491.9 748.0,491.2 750.0,491.2 752.0,491.3 754.0,490.1 756.0,490.9 758.0,491.0 760.0,489.6 762.0,488.4 764.0,490.8 766.0,490.2 768.0,488.6 770.0,489.5 772.0,490.0 774.0,490.7 776.0,489.3 778.0,489.8 780.0,490.7 782.0,490.4 784.0,490.8 786.0,489.5 788.0,490.0 790.0,488.8 792.0,490.2 794.0,490.5 796.0,490.0 798.0,490.2 800.0,489.6 802.0,489.0 804.0,491.2 806.0,491.7 808.0,491.9 810.0,490.9 812.0,491.9 814.0,490.8 816.0,492.7 818.0,492.8 820.0,492.0 822.0,492.0 824.0,491.6 826.0,493.0 828.0,493.7 830.0,494.8 832.0,494.4 834.0,493.5 836.0,496.1 838.0,494.4 840.0,496.0 842.1,497.1 844.1,495.5 846.2,496.2 848.2,497.7 850.3,496.1 852.4,496.3 854.4,497.6 856.5,498.4 858.5,498.9 860.6,498.7 862.6,499.6 864.7,498.6 866.8,500.1 868.8,497.9 870.9,498.5 872.9,499.6 875.0,499.7 875.0,503.5 871.8,503.4 868.6,504.3 865.5,504.4 862.3,504.4 859.1,505.2 855.9,505.0 852.7,504.8 849.5,505.1 846.4,506.1 843.2,506.4 840.0,506.0 836.9,505.7 833.8,506.9 830.8,507.2 827.7,506.7 824.6,506.9 821.5,506.4 818.5,507.1 815.4,507.2 812.3,507.6 809.2,506.8 806.2,508.4 803.1,507.9 800.0,508.0 796.9,508.1 793.8,508.9 790.8,508.8 787.7,508.9 784.6,509.5 781.5,508.7 778.5,509.7 775.4,509.7 772.3,510.8 769.2,511.0 766.2,510.2 763.1,510.7 760.0,511.0 756.9,510.6 753.8,511.2 750.8,512.0 747.7,512.3 744.6,511.7 741.5,511.6 738.5,511.6 735.4,512.4 732.3,513.1 729.2,511.9 726.2,513.1 723.1,512.1 720.0,513.0 716.7,512.2 713.3,511.9 710.0,512.3 706.7,511.4 703.3,511.1 700.0,511.0 696.9,510.8 693.8,509.6 690.8,510.2 687.7,508.9 684.6,509.1 681.5,508.3 678.5,507.8 675.4,508.0 672.3,507.4 669.2,507.0 666.2,506.6 663.1,506.4 660.0,506.0 656.7,505.3 653.3,505.1 650.0,505.6 646.7,505.4 643.3,505.0 640.0,504.8 636.9,505.3 633.8,504.9 630.8,505.2 627.7,504.1 624.6,504.9 621.5,504.9 618.5,505.0 615.4,504.0 612.3,504.0 609.2,504.9 606.2,503.7 603.1,504.9 600.0,504.0 597.0,504.7 593.9,503.5 590.9,503.7 587.9,504.5 584.8,503.8 581.8,503.6 578.8,504.8 575.8,504.2 572.7,504.9 569.7,503.9 566.7,504.3 563.6,504.8 560.6,503.8 557.6,504.2 554.5,505.0 551.5,505.4 548.5,505.5 545.5,504.2 542.4,504.9 539.4,505.3 536.4,505.0 533.3,505.3 530.3,504.5 527.3,504.4 524.2,504.5 521.2,504.4 518.2,505.3 515.2,505.3 512.1,505.4 509.1,504.8 506.1,504.9 503.0,505.0 500.0,505.5 497.0,506.1 493.9,506.3 490.9,506.2 487.9,504.9 484.8,504.9 481.8,506.3 478.8,505.5 475.8,506.0 472.7,505.4 469.7,505.6 466.7,505.7 463.6,505.6 460.6,505.9 457.6,504.9 454.5,506.0 451.5,506.3 448.5,505.2 445.5,505.7 442.4,506.2 439.4,505.7 436.4,505.3 433.3,505.3 430.3,505.9 427.3,505.1 424.2,506.5 421.2,506.4 418.2,506.2 415.2,506.5 412.1,506.1 409.1,505.8 406.1,506.1 403.0,506.0 400.0,506.0 397.0,506.8 393.9,506.5 390.9,505.6 387.9,506.7 384.8,506.4 381.8,506.4 378.8,506.5 375.8,505.8 372.7,506.6 369.7,506.6 366.7,506.3 363.6,506.4 360.6,506.4 357.6,505.8 354.5,506.4 351.5,505.3 348.5,505.7 345.5,506.0 342.4,505.2 339.4,505.8 336.4,506.2 333.3,506.2 330.3,505.6 327.3,506.7 324.2,506.3 321.2,505.7 318.2,506.3 315.2,506.1 312.1,506.1 309.1,505.8 306.1,506.8 303.0,506.2 300.0,506.0 297.0,506.4 294.0,506.5 291.0,506.9 288.0,505.4 285.0,506.4 282.0,506.7 279.0,506.0 276.0,506.2 273.0,505.7 270.0,506.0 267.0,506.4 264.0,506.0 261.0,506.3 258.0,507.3 255.0,506.8 252.0,506.8 249.0,507.6 246.0,507.0 243.0,507.7 240.0,507.0 236.9,507.5 233.8,508.1 230.8,507.2 227.7,508.4 224.6,509.0 221.5,508.1 218.5,509.8 215.4,508.9 212.3,509.7 209.2,509.5 206.2,510.4 203.1,510.9 200.0,511.0 197.0,510.5 194.0,512.2 191.0,511.6 188.0,512.0 185.0,512.3 182.0,512.2 179.0,512.3 176.0,513.1 173.0,513.2 170.0,513.0 167.0,513.9 164.0,513.4 161.0,514.0" fill="#fff"/><path d="M215 440.2 L221 440.7 L227 441.1 L233 441.6 L239 442.1 L245 442.5 L251 442.9 L257 443.4 L263 443.8 L269 444.2 L275 444.6 L281 444.9 L287 445.3 L293 445.6 L299 446.0 L305 446.3 L311 446.6 L317 446.9 L323 447.2 L329 447.5 L335 447.8 L341 448.0 L347 448.3 L353 448.5 L359 448.7 L365 449.0 L371 449.2 L377 449.4 L383 449.5 L389 449.7 L395 449.9 L401 450.0 L407 450.1 L413 450.3 L419 450.4 L425 450.5 L431 450.6 L437 450.6 L443 450.7 L449 450.8 L455 450.8 L461 450.8 L467 450.9 L473 450.9 L479 450.9 L485 450.9 L491 450.8 L497 450.8 L503 450.8 L509 450.7 L515 450.6 L521 450.6 L527 450.5 L533 450.4 L539 450.3 L545 450.1 L551 450.0 L557 449.9 L563 449.7 L569 449.5 L575 449.4 L581 449.2 L587 449.0 L593 448.8 L599 448.5 L605 448.3 L611 448.1 L617 447.8 L623 447.5 L629 447.3 L635 447.0 L641 446.7 L647 446.4 L653 446.1 L659 445.7 L665 445.4 L671 445.0 L677 444.7 L683 444.3 L689 443.9 L695 443.5 L701 443.1 L707 442.7 L713 442.3 L719 441.8 L725 441.4 L731 440.9 L737 440.5 L743 440.0 L749 439.5 L755 439.0 L761 438.5 L767 437.9 L773 437.4 L779 436.9 L785 436.3 L791 435.7 L797 435.2 L803 434.6 L809 434.0 L815 433.4 L821 432.8 L827 432.1 L833 431.5" stroke="#0a14f5" stroke-width="2.1" fill="none"/><path d="M215 455.0 L221 455.5 L227 456.0 L233 456.5 L239 457.0 L245 457.5 L251 458.0 L257 458.4 L263 458.9 L269 459.3 L275 459.7 L281 460.1 L287 460.5 L293 460.8 L299 461.2 L305 461.5 L311 461.8 L317 462.1 L323 462.4 L329 462.7 L335 463.0 L341 463.2 L347 463.5 L353 463.7 L359 463.9 L365 464.1 L371 464.3 L377 464.5 L383 464.7 L389 464.8 L395 464.9 L401 465.1 L407 465.2 L413 465.3 L419 465.4 L425 465.4 L431 465.5 L437 465.6 L443 465.6 L449 465.6 L455 465.6 L461 465.6 L467 465.6 L473 465.6 L479 465.6 L485 465.5 L491 465.5 L497 465.4 L503 465.3 L509 465.2 L515 465.1 L521 465.0 L527 464.9 L533 464.7 L539 464.6 L545 464.4 L551 464.3 L557 464.1 L563 463.9 L569 463.7 L575 463.5 L581 463.2 L587 463.0 L593 462.8 L599 462.5 L605 462.2 L611 462.0 L617 461.7 L623 461.4 L629 461.1 L635 460.8 L641 460.4 L647 460.1 L653 459.8 L659 459.4 L665 459.0 L671 458.7 L677 458.3 L683 457.9 L689 457.5 L695 457.1 L701 456.6 L707 456.2 L713 455.8 L719 455.3 L725 454.9 L731 454.4 L737 453.9 L743 453.4 L749 452.9 L755 452.4 L761 451.9 L767 451.4 L773 450.9 L779 450.3 L785 449.8 L791 449.2 L797 448.7 L803 448.1 L809 447.5 L815 447.0 L821 446.4 L827 445.8 L833 445.1" stroke="#0a14f5" stroke-width="2.1" fill="none"/><path d="M215 465.0 L221 465.5 L227 466.0 L233 466.5 L239 467.0 L245 467.5 L251 468.0 L257 468.4 L263 468.9 L269 469.3 L275 469.8 L281 470.2 L287 470.6 L293 471.0 L299 471.3 L305 471.7 L311 472.1 L317 472.4 L323 472.7 L329 473.0 L335 473.4 L341 473.6 L347 473.9 L353 474.2 L359 474.4 L365 474.7 L371 474.9 L377 475.1 L383 475.3 L389 475.5 L395 475.7 L401 475.9 L407 476.0 L413 476.2 L419 476.3 L425 476.4 L431 476.5 L437 476.6 L443 476.7 L449 476.8 L455 476.8 L461 476.9 L467 476.9 L473 476.9 L479 476.9 L485 476.9 L491 476.9 L497 476.9 L503 476.8 L509 476.8 L515 476.7 L521 476.6 L527 476.5 L533 476.4 L539 476.3 L545 476.2 L551 476.0 L557 475.8 L563 475.7 L569 475.5 L575 475.3 L581 475.1 L587 474.9 L593 474.6 L599 474.4 L605 474.1 L611 473.8 L617 473.5 L623 473.2 L629 472.9 L635 472.6 L641 472.3 L647 471.9 L653 471.6 L659 471.2 L665 470.8 L671 470.4 L677 470.0 L683 469.5 L689 469.1 L695 468.6 L701 468.2 L707 467.7 L713 467.2 L719 466.7 L725 466.2 L731 465.6 L737 465.1 L743 464.5 L749 463.9 L755 463.3 L761 462.7 L767 462.1 L773 461.5 L779 460.9 L785 460.2 L791 459.5 L797 458.9 L803 458.2 L809 457.5 L815 456.7 L821 456.0 L827 455.3 L833 454.5" stroke="#0a14f5" stroke-width="2.1" fill="none"/><path d="M215 475.4 L221 475.9 L227 476.4 L233 476.9 L239 477.3 L245 477.8 L251 478.2 L257 478.6 L263 479.0 L269 479.4 L275 479.8 L281 480.2 L287 480.5 L293 480.9 L299 481.2 L305 481.5 L311 481.8 L317 482.1 L323 482.4 L329 482.6 L335 482.9 L341 483.1 L347 483.3 L353 483.5 L359 483.7 L365 483.9 L371 484.1 L377 484.2 L383 484.4 L389 484.5 L395 484.6 L401 484.7 L407 484.8 L413 484.9 L419 485.0 L425 485.0 L431 485.1 L437 485.1 L443 485.1 L449 485.1 L455 485.1 L461 485.1 L467 485.1 L473 485.1 L479 485.0 L485 484.9 L491 484.9 L497 484.8 L503 484.7 L509 484.6 L515 484.5 L521 484.4 L527 484.2 L533 484.1 L539 483.9 L545 483.7 L551 483.6 L557 483.4 L563 483.2 L569 483.0 L575 482.8 L581 482.5 L587 482.3 L593 482.0 L599 481.8 L605 481.5 L611 481.2 L617 480.9 L623 480.6 L629 480.3 L635 480.0 L641 479.7 L647 479.4 L653 479.0 L659 478.7 L665 478.3 L671 477.9 L677 477.5 L683 477.2 L689 476.8 L695 476.4 L701 475.9 L707 475.5 L713 475.1 L719 474.6 L725 474.2 L731 473.7 L737 473.3 L743 472.8 L749 472.3 L755 471.8 L761 471.3 L767 470.8 L773 470.3 L779 469.8 L785 469.3 L791 468.7 L797 468.2 L803 467.7 L809 467.1 L815 466.5 L821 466.0 L827 465.4 L833 464.8" stroke="#0a14f5" stroke-width="2.1" fill="none"/><path d="M165 441H207M165 455H207M165 465.5H207M168 477L207 475" stroke="#0a14f5" stroke-width="1.6" stroke-dasharray="4 2" fill="none"/><path d="M832 431.5L862 433M832 445.5L862 446.5M832 455.5L862 457M832 465.5L862 467" stroke="#0a14f5" stroke-width="1.5" fill="none"/><polygon points="207,439.5 218,439.5 220,476 229,498 197,498 205,476" fill="#ff0000"/><ellipse cx="212.5" cy="455" rx="14" ry="2.6" fill="none" stroke="#ff0000" stroke-width="1.6"/><ellipse cx="212.5" cy="465" rx="14" ry="2.6" fill="none" stroke="#ff0000" stroke-width="1.6"/><ellipse cx="212.5" cy="475" rx="14" ry="2.6" fill="none" stroke="#ff0000" stroke-width="1.6"/><path d="M208.5 478.4l2.6 2.6-2.6 2.6-2.6-2.6z" fill="#000"/><path d="M216.5 478.4l2.6 2.6-2.6 2.6-2.6-2.6z" fill="#000"/><path d="M212.5 484.4l2.6 2.6-2.6 2.6-2.6-2.6z" fill="#000"/><path d="M204.5 486.4l2.6 2.6-2.6 2.6-2.6-2.6z" fill="#000"/><path d="M220.5 486.4l2.6 2.6-2.6 2.6-2.6-2.6z" fill="#000"/><path d="M208.5 491.4l2.6 2.6-2.6 2.6-2.6-2.6z" fill="#000"/><path d="M216.5 491.4l2.6 2.6-2.6 2.6-2.6-2.6z" fill="#000"/><polygon points="829,431 836,431 840,465 846,496 818,496 825,465" fill="#ff0000"/><rect x="822.5" y="430" width="20" height="2.5" fill="#ff0000"/><path d="M822.5 445v-5h20v5" fill="none" stroke="#ff0000" stroke-width="2.2"/><path d="M822.5 454.5v-5h20v5" fill="none" stroke="#ff0000" stroke-width="2.2"/><path d="M822.5 464v-5h20v5" fill="none" stroke="#ff0000" stroke-width="2.2"/><path d="M829 471.4l2.6 2.6-2.6 2.6-2.6-2.6z" fill="#000"/><path d="M836 471.4l2.6 2.6-2.6 2.6-2.6-2.6z" fill="#000"/><path d="M832.5 477.4l2.6 2.6-2.6 2.6-2.6-2.6z" fill="#000"/><path d="M826 481.4l2.6 2.6-2.6 2.6-2.6-2.6z" fill="#000"/><path d="M839 481.4l2.6 2.6-2.6 2.6-2.6-2.6z" fill="#000"/><path d="M829 487.4l2.6 2.6-2.6 2.6-2.6-2.6z" fill="#000"/><path d="M836 487.4l2.6 2.6-2.6 2.6-2.6-2.6z" fill="#000"/><ellipse cx="320" cy="485.3" rx="19.7" ry="9.6" fill="none" stroke="#e01818" stroke-width="1.5"/><ellipse cx="475" cy="485" rx="19.7" ry="10" fill="none" stroke="#e01818" stroke-width="1.5"/><path d="M319 488l1.5-6 1.5 6z" fill="#40d060"/><path d="M464 484l2 6 2-6zM478 483q3-3 6 0z" fill="#40d060"/><rect x="470" y="484" width="2" height="1" fill="#40d060"/><circle cx="164" cy="504" r="1.5" fill="#40d060"/><path d="M852 420V406" stroke="#1030ff" stroke-width="1.2"/><path d="M850 408l2-3 2 3z" fill="#1030ff"/><path d="M852 419h10" stroke="#ff1010" stroke-width="1.2"/><path d="M854 416h3" stroke="#00e000" stroke-width="1.5"/><path d="M863 413l3 3M866 413l-3 3" stroke="#ff1010" stroke-width=".8"/></svg>
<div class="a" style="left:881px;top:64px;width:140px;height:11.5px;background:#d8d8d8;border-top:1px solid #cfcfcf"></div>
<div class="a t" style="left:884px;top:68px;font-family:'Liberation Mono',monospace;font-size:7.5px;color:#000;letter-spacing:0px;-webkit-text-stroke:0.3px #000;transform:scaleX(0.7111);transform-origin:0 0">ToolBox</div>
<svg style="left:1004px;top:68px" width="6" height="6"><rect x="1.5" y=".5" width="4" height="3" fill="none" stroke="#111" stroke-width="1"/><rect x=".5" y="2.5" width="4" height="3" fill="#d8d8d8" stroke="#111" stroke-width="1"/></svg>
<svg style="left:1014px;top:68px" width="6" height="6"><path d="M.5 .5l5 5M5.5 .5l-5 5" stroke="#111" stroke-width="1.2"/></svg>
<div class="a" style="left:881.5px;top:78px;width:123px;height:11.5px;background:#fff;border:1px solid #e4e4e4"></div>
<div class="a" style="left:1008px;top:77px;width:12.5px;height:13px;border:1px solid #a8a8a8;border-radius:2px;background:linear-gradient(#fafafa,#e0e0e0)"></div>
<svg style="left:1009.5px;top:78.5px" width="10" height="10"><circle cx="4.3" cy="4.3" r="3.3" fill="#f4f4f4" stroke="#8a8a8a" stroke-width="1"/><path d="M6.8 6.8l2.4 2.4" stroke="#e89a30" stroke-width="1.8"/></svg>
<div class="a" style="left:881px;top:93px;width:140.5px;height:445px;background:#fff;border:1px solid #c2c8d2"></div>
<div class="a" style="left:882px;top:94px;width:139px;height:434px;overflow:hidden">
<svg style="left:4px;top:3.200000000000003px" width="4" height="4"><path d="M3.5 0V3.5H0z" fill="#333"/></svg>
<svg style="left:12px;top:0.7000000000000028px" width="9" height="9" viewBox="0 0 14 14"><rect x="1" y="1" width="11" height="9" fill="#e83a2a"/><path d="M3 4h3M3 6h2" stroke="#fff" stroke-width=".8"/><path d="M4 13l7-7" stroke="#3a9ae0" stroke-width="2.2"/><circle cx="11" cy="4" r="2" fill="none" stroke="#aaa" stroke-width="1"/></svg>
<div class="a t" style="left:24px;top:2.6000000000000028px;font-size:7.3px;letter-spacing:-0.12px;color:#1a1a1a">ToolBox</div>
<svg style="left:15px;top:13.710000000000008px" width="4" height="4"><path d="M3.5 0V3.5H0z" fill="#333"/></svg>
<svg style="left:23px;top:11.210000000000008px" width="9" height="9" viewBox="0 0 14 14"><rect x="1" y="1" width="11" height="9" fill="#e83a2a"/><path d="M3 4h3M3 6h2" stroke="#fff" stroke-width=".8"/><path d="M4 13l7-7" stroke="#3a9ae0" stroke-width="2.2"/><circle cx="11" cy="4" r="2" fill="none" stroke="#aaa" stroke-width="1"/></svg>
<div class="a t" style="left:35px;top:13.110000000000008px;font-size:7.3px;letter-spacing:-0.12px;color:#1a1a1a">Strip Adjustment</div>
<svg style="left:34px;top:21.72px" width="9" height="9" viewBox="0 0 14 14"><path d="M1.5 13L7 7.5L12.5 13" stroke="#2a8ae0" stroke-width="2.6" fill="none"/><path d="M3 2.5h8M2.5 5.5h9" stroke="#808080" stroke-width="1.4"/><path d="M5 1v6M9 1v6" stroke="#9a9a9a" stroke-width="1"/></svg>
<div class="a t" style="left:46px;top:23.619999999999997px;font-size:7.3px;letter-spacing:-0.12px;color:#1a1a1a">Strip Adjustment</div>
<svg style="left:15px;top:34.73000000000002px" width="4" height="4"><path d="M3.5 0V3.5H0z" fill="#333"/></svg>
<svg style="left:23px;top:32.23000000000002px" width="9" height="9" viewBox="0 0 14 14"><rect x="1" y="1" width="11" height="9" fill="#e83a2a"/><path d="M3 4h3M3 6h2" stroke="#fff" stroke-width=".8"/><path d="M4 13l7-7" stroke="#3a9ae0" stroke-width="2.2"/><circle cx="11" cy="4" r="2" fill="none" stroke="#aaa" stroke-width="1"/></svg>
<div class="a t" style="left:35px;top:34.13000000000002px;font-size:7.3px;letter-spacing:-0.12px;color:#1a1a1a">Data Management</div>
<svg style="left:26px;top:44.74000000000001px" width="4" height="6"><path d="M.5 .5L3.5 2.75 .5 5z" fill="none" stroke="#777" stroke-width=".8"/></svg>
<svg style="left:34px;top:42.74000000000001px" width="9" height="9" viewBox="0 0 14 14"><rect x="1" y="1" width="11" height="9" fill="#e83a2a"/><path d="M3 4h3M3 6h2" stroke="#fff" stroke-width=".8"/><path d="M4 13l7-7" stroke="#3a9ae0" stroke-width="2.2"/><circle cx="11" cy="4" r="2" fill="none" stroke="#aaa" stroke-width="1"/></svg>
<div class="a t" style="left:46px;top:44.64000000000001px;font-size:7.3px;letter-spacing:-0.12px;color:#1a1a1a">Point Cloud Tools</div>
<svg style="left:26px;top:55.25px" width="4" height="6"><path d="M.5 .5L3.5 2.75 .5 5z" fill="none" stroke="#777" stroke-width=".8"/></svg>
<svg style="left:34px;top:53.25px" width="9" height="9" viewBox="0 0 14 14"><rect x="1" y="1" width="11" height="9" fill="#e83a2a"/><path d="M3 4h3M3 6h2" stroke="#fff" stroke-width=".8"/><path d="M4 13l7-7" stroke="#3a9ae0" stroke-width="2.2"/><circle cx="11" cy="4" r="2" fill="none" stroke="#aaa" stroke-width="1"/></svg>
<div class="a t" style="left:46px;top:55.15px;font-size:7.3px;letter-spacing:-0.12px;color:#1a1a1a">Raster Tools</div>
<svg style="left:26px;top:65.75999999999999px" width="4" height="6"><path d="M.5 .5L3.5 2.75 .5 5z" fill="none" stroke="#777" stroke-width=".8"/></svg>
<svg style="left:34px;top:63.75999999999999px" width="9" height="9" viewBox="0 0 14 14"><rect x="1" y="1" width="11" height="9" fill="#e83a2a"/><path d="M3 4h3M3 6h2" stroke="#fff" stroke-width=".8"/><path d="M4 13l7-7" stroke="#3a9ae0" stroke-width="2.2"/><circle cx="11" cy="4" r="2" fill="none" stroke="#aaa" stroke-width="1"/></svg>
<div class="a t" style="left:46px;top:65.66px;font-size:7.3px;letter-spacing:-0.12px;color:#1a1a1a">Clip</div>
<svg style="left:26px;top:76.26999999999998px" width="4" height="6"><path d="M.5 .5L3.5 2.75 .5 5z" fill="none" stroke="#777" stroke-width=".8"/></svg>
<svg style="left:34px;top:74.26999999999998px" width="9" height="9" viewBox="0 0 14 14"><rect x="1" y="1" width="11" height="9" fill="#e83a2a"/><path d="M3 4h3M3 6h2" stroke="#fff" stroke-width=".8"/><path d="M4 13l7-7" stroke="#3a9ae0" stroke-width="2.2"/><circle cx="11" cy="4" r="2" fill="none" stroke="#aaa" stroke-width="1"/></svg>
<div class="a t" style="left:46px;top:76.16999999999999px;font-size:7.3px;letter-spacing:-0.12px;color:#1a1a1a">Conversion</div>
<svg style="left:26px;top:86.78px" width="4" height="6"><path d="M.5 .5L3.5 2.75 .5 5z" fill="none" stroke="#777" stroke-width=".8"/></svg>
<svg style="left:34px;top:84.78px" width="9" height="9" viewBox="0 0 14 14"><rect x="1" y="1" width="11" height="9" fill="#e83a2a"/><path d="M3 4h3M3 6h2" stroke="#fff" stroke-width=".8"/><path d="M4 13l7-7" stroke="#3a9ae0" stroke-width="2.2"/><circle cx="11" cy="4" r="2" fill="none" stroke="#aaa" stroke-width="1"/></svg>
<div class="a t" style="left:46px;top:86.68px;font-size:7.3px;letter-spacing:-0.12px;color:#1a1a1a">Extract</div>
<svg style="left:15px;top:97.79000000000002px" width="4" height="4"><path d="M3.5 0V3.5H0z" fill="#333"/></svg>
<svg style="left:23px;top:95.29000000000002px" width="9" height="9" viewBox="0 0 14 14"><rect x="1" y="1" width="11" height="9" fill="#e83a2a"/><path d="M3 4h3M3 6h2" stroke="#fff" stroke-width=".8"/><path d="M4 13l7-7" stroke="#3a9ae0" stroke-width="2.2"/><circle cx="11" cy="4" r="2" fill="none" stroke="#aaa" stroke-width="1"/></svg>
<div class="a t" style="left:35px;top:97.19000000000003px;font-size:7.3px;letter-spacing:-0.12px;color:#1a1a1a">Statistics</div>
<svg style="left:34px;top:105.80000000000001px" width="9" height="9" viewBox="0 0 14 14"><path d="M1.5 13L7 7.5L12.5 13" stroke="#2a8ae0" stroke-width="2.6" fill="none"/><path d="M3 2.5h8M2.5 5.5h9" stroke="#808080" stroke-width="1.4"/><path d="M5 1v6M9 1v6" stroke="#9a9a9a" stroke-width="1"/></svg>
<div class="a t" style="left:46px;top:107.70000000000002px;font-size:7.3px;letter-spacing:-0.12px;color:#1a1a1a">Grid Statistics</div>
<svg style="left:15px;top:118.81px" width="4" height="4"><path d="M3.5 0V3.5H0z" fill="#333"/></svg>
<svg style="left:23px;top:116.31px" width="9" height="9" viewBox="0 0 14 14"><rect x="1" y="1" width="11" height="9" fill="#e83a2a"/><path d="M3 4h3M3 6h2" stroke="#fff" stroke-width=".8"/><path d="M4 13l7-7" stroke="#3a9ae0" stroke-width="2.2"/><circle cx="11" cy="4" r="2" fill="none" stroke="#aaa" stroke-width="1"/></svg>
<div class="a t" style="left:35px;top:118.21000000000001px;font-size:7.3px;letter-spacing:-0.12px;color:#1a1a1a">Classify</div>
<svg style="left:34px;top:126.82px" width="9" height="9" viewBox="0 0 14 14"><path d="M1.5 13L7 7.5L12.5 13" stroke="#2a8ae0" stroke-width="2.6" fill="none"/><path d="M3 2.5h8M2.5 5.5h9" stroke="#808080" stroke-width="1.4"/><path d="M5 1v6M9 1v6" stroke="#9a9a9a" stroke-width="1"/></svg>
<div class="a t" style="left:46px;top:128.72px;font-size:7.3px;letter-spacing:-0.12px;color:#1a1a1a">Classify Ground</div>
<svg style="left:34px;top:137.32999999999998px" width="9" height="9" viewBox="0 0 14 14"><path d="M1.5 13L7 7.5L12.5 13" stroke="#2a8ae0" stroke-width="2.6" fill="none"/><path d="M3 2.5h8M2.5 5.5h9" stroke="#808080" stroke-width="1.4"/><path d="M5 1v6M9 1v6" stroke="#9a9a9a" stroke-width="1"/></svg>
<div class="a t" style="left:46px;top:139.23px;font-size:7.3px;letter-spacing:-0.12px;color:#1a1a1a">Classify by Attribute</div>
<svg style="left:34px;top:147.83999999999997px" width="9" height="9" viewBox="0 0 14 14"><path d="M1.5 13L7 7.5L12.5 13" stroke="#2a8ae0" stroke-width="2.6" fill="none"/><path d="M3 2.5h8M2.5 5.5h9" stroke="#808080" stroke-width="1.4"/><path d="M5 1v6M9 1v6" stroke="#9a9a9a" stroke-width="1"/></svg>
<div class="a t" style="left:46px;top:149.73999999999998px;font-size:7.3px;letter-spacing:-0.12px;color:#1a1a1a">Classify Low Points</div>
<svg style="left:34px;top:158.35000000000002px" width="9" height="9" viewBox="0 0 14 14"><path d="M1.5 13L7 7.5L12.5 13" stroke="#2a8ae0" stroke-width="2.6" fill="none"/><path d="M3 2.5h8M2.5 5.5h9" stroke="#808080" stroke-width="1.4"/><path d="M5 1v6M9 1v6" stroke="#9a9a9a" stroke-width="1"/></svg>
<div class="a t" style="left:46px;top:160.25000000000003px;font-size:7.3px;letter-spacing:-0.12px;color:#1a1a1a">Classify by Below Surface</div>
<svg style="left:34px;top:168.86px" width="9" height="9" viewBox="0 0 14 14"><path d="M1.5 13L7 7.5L12.5 13" stroke="#2a8ae0" stroke-width="2.6" fill="none"/><path d="M3 2.5h8M2.5 5.5h9" stroke="#808080" stroke-width="1.4"/><path d="M5 1v6M9 1v6" stroke="#9a9a9a" stroke-width="1"/></svg>
<div class="a t" style="left:46px;top:170.76000000000002px;font-size:7.3px;letter-spacing:-0.12px;color:#1a1a1a">Classify Isolated Points</div>
<svg style="left:34px;top:179.37px" width="9" height="9" viewBox="0 0 14 14"><path d="M1.5 13L7 7.5L12.5 13" stroke="#2a8ae0" stroke-width="2.6" fill="none"/><path d="M3 2.5h8M2.5 5.5h9" stroke="#808080" stroke-width="1.4"/><path d="M5 1v6M9 1v6" stroke="#9a9a9a" stroke-width="1"/></svg>
<div class="a t" style="left:46px;top:181.27px;font-size:7.3px;letter-spacing:-0.12px;color:#1a1a1a">Classify Air Points</div>
<svg style="left:34px;top:189.88px" width="9" height="9" viewBox="0 0 14 14"><path d="M1.5 13L7 7.5L12.5 13" stroke="#2a8ae0" stroke-width="2.6" fill="none"/><path d="M3 2.5h8M2.5 5.5h9" stroke="#808080" stroke-width="1.4"/><path d="M5 1v6M9 1v6" stroke="#9a9a9a" stroke-width="1"/></svg>
<div class="a t" style="left:46px;top:191.78px;font-size:7.3px;letter-spacing:-0.12px;color:#1a1a1a">Classify by Height Above Ground</div>
<svg style="left:34px;top:200.39px" width="9" height="9" viewBox="0 0 14 14"><path d="M1.5 13L7 7.5L12.5 13" stroke="#2a8ae0" stroke-width="2.6" fill="none"/><path d="M3 2.5h8M2.5 5.5h9" stroke="#808080" stroke-width="1.4"/><path d="M5 1v6M9 1v6" stroke="#9a9a9a" stroke-width="1"/></svg>
<div class="a t" style="left:46px;top:202.29px;font-size:7.3px;letter-spacing:-0.12px;color:#1a1a1a">Classify by Min Elevation</div>
<svg style="left:34px;top:210.89999999999998px" width="9" height="9" viewBox="0 0 14 14"><path d="M1.5 13L7 7.5L12.5 13" stroke="#2a8ae0" stroke-width="2.6" fill="none"/><path d="M3 2.5h8M2.5 5.5h9" stroke="#808080" stroke-width="1.4"/><path d="M5 1v6M9 1v6" stroke="#9a9a9a" stroke-width="1"/></svg>
<div class="a t" style="left:46px;top:212.79999999999998px;font-size:7.3px;letter-spacing:-0.12px;color:#1a1a1a">Classify Buildings</div>
<svg style="left:15px;top:223.91000000000003px" width="4" height="4"><path d="M3.5 0V3.5H0z" fill="#333"/></svg>
<svg style="left:23px;top:221.41000000000003px" width="9" height="9" viewBox="0 0 14 14"><rect x="1" y="1" width="11" height="9" fill="#e83a2a"/><path d="M3 4h3M3 6h2" stroke="#fff" stroke-width=".8"/><path d="M4 13l7-7" stroke="#3a9ae0" stroke-width="2.2"/><circle cx="11" cy="4" r="2" fill="none" stroke="#aaa" stroke-width="1"/></svg>
<div class="a t" style="left:35px;top:223.31000000000003px;font-size:7.3px;letter-spacing:-0.12px;color:#1a1a1a">Surface Model</div>
<svg style="left:34px;top:231.92000000000002px" width="9" height="9" viewBox="0 0 14 14"><path d="M1.5 13L7 7.5L12.5 13" stroke="#2a8ae0" stroke-width="2.6" fill="none"/><path d="M3 2.5h8M2.5 5.5h9" stroke="#808080" stroke-width="1.4"/><path d="M5 1v6M9 1v6" stroke="#9a9a9a" stroke-width="1"/></svg>
<div class="a t" style="left:46px;top:233.82000000000002px;font-size:7.3px;letter-spacing:-0.12px;color:#1a1a1a">DEM</div>
<svg style="left:34px;top:242.43px" width="9" height="9" viewBox="0 0 14 14"><path d="M1.5 13L7 7.5L12.5 13" stroke="#2a8ae0" stroke-width="2.6" fill="none"/><path d="M3 2.5h8M2.5 5.5h9" stroke="#808080" stroke-width="1.4"/><path d="M5 1v6M9 1v6" stroke="#9a9a9a" stroke-width="1"/></svg>
<div class="a t" style="left:46px;top:244.33px;font-size:7.3px;letter-spacing:-0.12px;color:#1a1a1a">DSM</div>
<svg style="left:34px;top:252.94px" width="9" height="9" viewBox="0 0 14 14"><path d="M1.5 13L7 7.5L12.5 13" stroke="#2a8ae0" stroke-width="2.6" fill="none"/><path d="M3 2.5h8M2.5 5.5h9" stroke="#808080" stroke-width="1.4"/><path d="M5 1v6M9 1v6" stroke="#9a9a9a" stroke-width="1"/></svg>
<div class="a t" style="left:46px;top:254.84px;font-size:7.3px;letter-spacing:-0.12px;color:#1a1a1a">CHM</div>
<svg style="left:34px;top:263.45px" width="9" height="9" viewBox="0 0 14 14"><path d="M1.5 13L7 7.5L12.5 13" stroke="#2a8ae0" stroke-width="2.6" fill="none"/><path d="M3 2.5h8M2.5 5.5h9" stroke="#808080" stroke-width="1.4"/><path d="M5 1v6M9 1v6" stroke="#9a9a9a" stroke-width="1"/></svg>
<div class="a t" style="left:46px;top:265.34999999999997px;font-size:7.3px;letter-spacing:-0.12px;color:#1a1a1a">Hillshade</div>
<svg style="left:34px;top:273.96px" width="9" height="9" viewBox="0 0 14 14"><path d="M1.5 13L7 7.5L12.5 13" stroke="#2a8ae0" stroke-width="2.6" fill="none"/><path d="M3 2.5h8M2.5 5.5h9" stroke="#808080" stroke-width="1.4"/><path d="M5 1v6M9 1v6" stroke="#9a9a9a" stroke-width="1"/></svg>
<div class="a t" style="left:46px;top:275.85999999999996px;font-size:7.3px;letter-spacing:-0.12px;color:#1a1a1a">Slope</div>
<svg style="left:34px;top:284.46999999999997px" width="9" height="9" viewBox="0 0 14 14"><path d="M1.5 13L7 7.5L12.5 13" stroke="#2a8ae0" stroke-width="2.6" fill="none"/><path d="M3 2.5h8M2.5 5.5h9" stroke="#808080" stroke-width="1.4"/><path d="M5 1v6M9 1v6" stroke="#9a9a9a" stroke-width="1"/></svg>
<div class="a t" style="left:46px;top:286.36999999999995px;font-size:7.3px;letter-spacing:-0.12px;color:#1a1a1a">Roughness</div>
<svg style="left:34px;top:294.97999999999996px" width="9" height="9" viewBox="0 0 14 14"><path d="M1.5 13L7 7.5L12.5 13" stroke="#2a8ae0" stroke-width="2.6" fill="none"/><path d="M3 2.5h8M2.5 5.5h9" stroke="#808080" stroke-width="1.4"/><path d="M5 1v6M9 1v6" stroke="#9a9a9a" stroke-width="1"/></svg>
<div class="a t" style="left:46px;top:296.87999999999994px;font-size:7.3px;letter-spacing:-0.12px;color:#1a1a1a">Aspect</div>
<svg style="left:34px;top:305.49px" width="9" height="9" viewBox="0 0 14 14"><path d="M1.5 13L7 7.5L12.5 13" stroke="#2a8ae0" stroke-width="2.6" fill="none"/><path d="M3 2.5h8M2.5 5.5h9" stroke="#808080" stroke-width="1.4"/><path d="M5 1v6M9 1v6" stroke="#9a9a9a" stroke-width="1"/></svg>
<div class="a t" style="left:46px;top:307.39px;font-size:7.3px;letter-spacing:-0.12px;color:#1a1a1a">Contour</div>
<svg style="left:34px;top:316.0px" width="9" height="9" viewBox="0 0 14 14"><path d="M1.5 13L7 7.5L12.5 13" stroke="#2a8ae0" stroke-width="2.6" fill="none"/><path d="M3 2.5h8M2.5 5.5h9" stroke="#808080" stroke-width="1.4"/><path d="M5 1v6M9 1v6" stroke="#9a9a9a" stroke-width="1"/></svg>
<div class="a t" style="left:46px;top:317.9px;font-size:7.3px;letter-spacing:-0.12px;color:#1a1a1a">Generate CHM by Point Cloud</div>
<svg style="left:34px;top:326.51px" width="9" height="9" viewBox="0 0 14 14"><path d="M1.5 13L7 7.5L12.5 13" stroke="#2a8ae0" stroke-width="2.6" fill="none"/><path d="M3 2.5h8M2.5 5.5h9" stroke="#808080" stroke-width="1.4"/><path d="M5 1v6M9 1v6" stroke="#9a9a9a" stroke-width="1"/></svg>
<div class="a t" style="left:46px;top:328.40999999999997px;font-size:7.3px;letter-spacing:-0.12px;color:#1a1a1a">Gauss Smooth</div>
</div>
<div class="a" style="left:882px;top:528px;width:139px;height:9px;background:#efefef;border-top:1px solid #e2e2e2"></div>
<div class="a" style="left:891.5px;top:528px;width:59px;height:9px;background:linear-gradient(#fbfbfb,#e2e2e2 60%,#d6d6d6);border:1px solid #b4b4b4;border-radius:2px"></div>
<svg style="left:918px;top:530px" width="6" height="5"><path d="M.5 0v5M2.5 0v5M4.5 0v5" stroke="#777" stroke-width=".8"/></svg>
<svg style="left:884px;top:530px" width="4" height="5"><path d="M3.5 0v5L0 2.5z" fill="#444"/></svg>
<svg style="left:1014px;top:530px" width="4" height="5"><path d="M.5 0v5L4 2.5z" fill="#444"/></svg>
<div class="a" style="left:1px;top:537.5px;width:1022px;height:15.5px;background:#d7d7d7;border-top:1px solid #c8c8c8;border-bottom:2px solid #f6f6f6"></div>
<svg style="left:9px;top:541px" width="8" height="9"><circle cx="4" cy="5" r="3.5" fill="#2a8ad0"/><path d="M1 5.5q3-2 6 0v2q-3 1.5-6 0z" fill="#40b040"/><path d="M4 1.5a3.5 3.5 0 0 1 3.5 3.5" stroke="#eee" stroke-width=".6" fill="none"/></svg>
<div class="a t" style="left:225px;top:543px;font-family:'Liberation Mono',monospace;font-size:7.5px;color:#383838;letter-spacing:0px;;-webkit-text-stroke:0;transform:scaleX(0.7111);transform-origin:0 0">X = 308928.483,Y = 2035249.105,Z = 183.711</div>
<svg style="left:0;top:0;pointer-events:none" width="1024" height="555"><g opacity="0.13"><path transform="translate(150 376) rotate(-24) scale(0.95) translate(-50 -50)" d="M18 8L24 20M42 8L34 20M8 30H48M28 6V48M28 32L10 50M28 32L46 46M26 52L12 78M8 66H50M42 56L20 96M18 78L46 96M62 6L54 36M58 24H94M86 28L58 92M64 46L96 94" stroke="#808080" stroke-width="8.5" stroke-linecap="round" stroke-linejoin="round" fill="none"/><path transform="translate(244 318) rotate(-24) scale(0.95) translate(-50 -50)" d="M50 4L54 16M14 32V22H86L82 32M30 42H70L50 58M50 58V92L40 86M10 64H90" stroke="#808080" stroke-width="8.5" stroke-linecap="round" stroke-linejoin="round" fill="none"/><path transform="translate(363 270) rotate(-24) scale(0.95) translate(-50 -50)" d="M26 4L12 30H30L8 56L36 50M8 74L36 64M6 94L38 80M48 12H86V42M50 27H86M44 42H94M68 44V94L60 90M48 56L60 70M44 88L62 72M88 52L76 62M72 68L96 94" stroke="#808080" stroke-width="8.5" stroke-linecap="round" stroke-linejoin="round" fill="none"/><path transform="translate(481 220) rotate(-24) scale(0.95) translate(-50 -50)" d="M22 42H78M50 10V84M8 86H92" stroke="#808080" stroke-width="8.5" stroke-linecap="round" stroke-linejoin="round" fill="none"/><path transform="translate(597 376) rotate(-24) scale(0.95) translate(-50 -50)" d="M18 8L24 20M42 8L34 20M8 30H48M28 6V48M28 32L10 50M28 32L46 46M26 52L12 78M8 66H50M42 56L20 96M18 78L46 96M62 6L54 36M58 24H94M86 28L58 92M64 46L96 94" stroke="#808080" stroke-width="8.5" stroke-linecap="round" stroke-linejoin="round" fill="none"/><path transform="translate(691 318) rotate(-24) scale(0.95) translate(-50 -50)" d="M50 4L54 16M14 32V22H86L82 32M30 42H70L50 58M50 58V92L40 86M10 64H90" stroke="#808080" stroke-width="8.5" stroke-linecap="round" stroke-linejoin="round" fill="none"/><path transform="translate(810 270) rotate(-24) scale(0.95) translate(-50 -50)" d="M26 4L12 30H30L8 56L36 50M8 74L36 64M6 94L38 80M48 12H86V42M50 27H86M44 42H94M68 44V94L60 90M48 56L60 70M44 88L62 72M88 52L76 62M72 68L96 94" stroke="#808080" stroke-width="8.5" stroke-linecap="round" stroke-linejoin="round" fill="none"/><path transform="translate(928 220) rotate(-24) scale(0.95) translate(-50 -50)" d="M22 42H78M50 10V84M8 86H92" stroke="#808080" stroke-width="8.5" stroke-linecap="round" stroke-linejoin="round" fill="none"/></g><g opacity="0.25"><path d="M845.5 502C848 492 856 488 866 488C890 488 920 494 948 503C930 512 900 512 875 511C860 510 848 507 845.5 502z" fill="#3088c8"/><path d="M874 489C888 480 905 475 922 476C945 477 958 486 966 497C968 505 962 508 955 507L948 503C925 494 900 488 874 489z" fill="#54a464"/><path d="M874 489C900 489 925 494 948 503" stroke="#fff" stroke-width="1.6" fill="none"/><circle cx="852.3" cy="479.4" r="6" fill="#3088c8"/><circle cx="868.7" cy="484" r="3.8" fill="#3088c8"/><circle cx="950.7" cy="479.4" r="3.8" fill="#54a464"/><circle cx="963.7" cy="490.3" r="2.3" fill="#54a464"/><path d="M951 482v6" stroke="#54a464" stroke-width="1"/></g><g opacity="0.22"><path transform="translate(861 524) scale(0.19) translate(-50 -50)" d="M18 8L24 20M42 8L34 20M8 30H48M28 6V48M28 32L10 50M28 32L46 46M26 52L12 78M8 66H50M42 56L20 96M18 78L46 96M62 6L54 36M58 24H94M86 28L58 92M64 46L96 94" stroke="#3088c8" stroke-width="12" stroke-linecap="round" fill="none"/><path transform="translate(890 524) scale(0.19) translate(-50 -50)" d="M50 4L54 16M14 32V22H86L82 32M30 42H70L50 58M50 58V92L40 86M10 64H90" stroke="#3088c8" stroke-width="12" stroke-linecap="round" fill="none"/><path transform="translate(920 524) scale(0.19) translate(-50 -50)" d="M26 4L12 30H30L8 56L36 50M8 74L36 64M6 94L38 80M48 12H86V42M50 27H86M44 42H94M68 44V94L60 90M48 56L60 70M44 88L62 72M88 52L76 62M72 68L96 94" stroke="#3088c8" stroke-width="12" stroke-linecap="round" fill="none"/><path transform="translate(952 524) scale(0.19) translate(-50 -50)" d="M22 42H78M50 10V84M8 86H92" stroke="#3088c8" stroke-width="12" stroke-linecap="round" fill="none"/></g></svg>
</body></html>
